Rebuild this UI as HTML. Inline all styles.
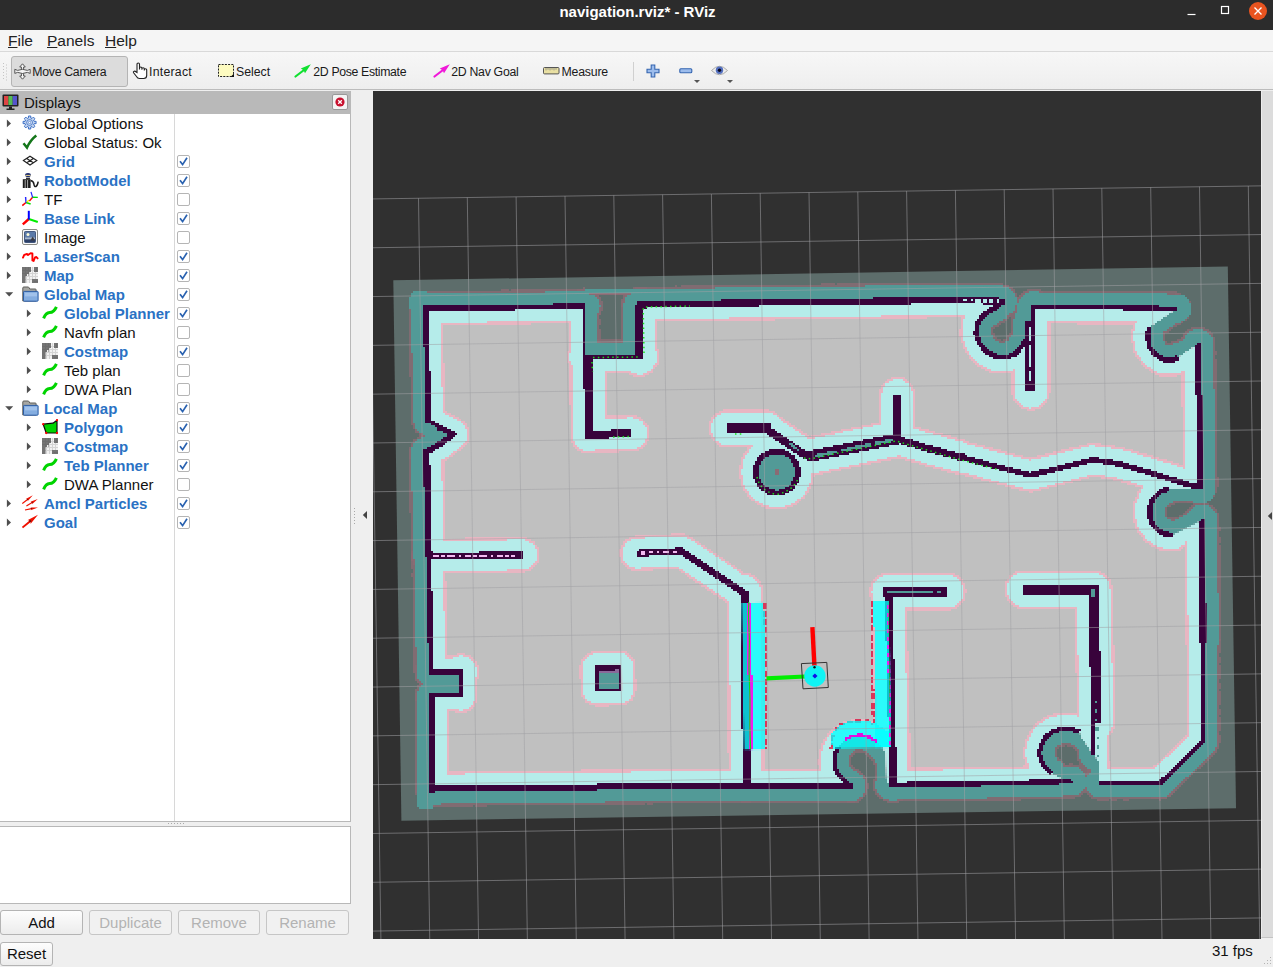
<!DOCTYPE html>
<html><head><meta charset="utf-8"><title>navigation.rviz* - RViz</title>
<style>
html,body{margin:0;padding:0}
body{width:1273px;height:967px;overflow:hidden;background:#efefef;font-family:"Liberation Sans","DejaVu Sans",sans-serif;font-size:15px;color:#1a1a1a;position:relative}
#title{position:absolute;left:0;top:0;width:1273px;height:30px;background:#2c2c2c}
#title .t{position:absolute;left:0;width:1275px;top:3px;text-align:center;color:#fff;font-weight:bold;font-size:15px;line-height:18px}
#menu{position:absolute;left:0;top:30px;width:1273px;height:22px;background:#f5f5f5;border-bottom:1px solid #d9d9d9;box-sizing:content-box;height:21px}
#menu span{position:absolute;top:1px;line-height:19px;font-size:15.5px;color:#222}
#menu u{text-decoration-thickness:1px;text-underline-offset:1px}
#tb{position:absolute;left:0;top:52px;width:1273px;height:37px;background:linear-gradient(#f7f7f7,#eeeeee);border-bottom:1px solid #bcbcbc}
#tb .btn{position:absolute;top:4px;height:28px;box-sizing:border-box}
#tb .tx{position:absolute;top:11.5px;font-size:12.3px;line-height:16px;color:#1a1a1a;white-space:nowrap}
#tb svg{position:absolute}
#dh{position:absolute;left:0;top:91px;width:351px;height:23px;background:#b9b9b9}
#dh .t{position:absolute;left:24px;top:2px;line-height:19px;font-size:15px;color:#111}
#tree{position:absolute;left:0;top:114px;width:350px;height:707px;background:#fff;border-right:1px solid #b8b8b8;border-bottom:1px solid #b8b8b8}
#tree .div{position:absolute;left:174px;top:0;width:1px;height:707px;background:#d8d8d8}
.ar,.ic,.lb,.cb{position:absolute}
.ic{width:16px;height:16px}
.lb{line-height:19px;white-space:nowrap;color:#111}
.lb.b{font-weight:bold;color:#2a72c4}
.cb{width:11px;height:11px;border:1px solid #b5b5b5;background:#fff;border-radius:2px}
#desc{position:absolute;left:0;top:826px;width:350px;height:76px;background:#fff;border:1px solid #b8b8b8;border-left:none}
.pb{position:absolute;box-sizing:border-box;border:1px solid #b4b4b4;border-radius:3px;background:linear-gradient(#fdfdfd,#ececec);text-align:center;font-size:15px;line-height:23px;color:#111}
.pb.dis{color:#b3b3b3;background:#f1f1f1;border-color:#c6c6c6}
#fps{position:absolute;left:1212px;top:941px;line-height:19px;font-size:15px;color:#111}
#view{position:absolute;left:373px;top:91px;width:888px;height:848px;background:#303030;overflow:hidden}
#rside{position:absolute;left:1261px;top:91px;width:12px;height:847px;background:#dcdcdc;border-left:1px solid #ececec;border-bottom:1px solid #c4c4c4;box-sizing:border-box}
</style></head>
<body>
<div id="title"><div class="t">navigation.rviz* - RViz</div>
 <svg style="position:absolute;left:1180px;top:0" width="93" height="30" viewBox="0 0 93 30">
  <path d="M7.5 14.5 h8" stroke="#fff" stroke-width="1.2"/>
  <rect x="41.5" y="6.5" width="7" height="7" fill="none" stroke="#fff" stroke-width="1.2"/>
  <circle cx="78" cy="11" r="9" fill="#e95420"/>
  <path d="M74.5 7.5 l7 7 M81.5 7.5 l-7 7" stroke="#fff" stroke-width="1.4"/>
 </svg>
</div>
<div id="menu"><span style="left:8px"><u>F</u>ile</span><span style="left:47px"><u>P</u>anels</span><span style="left:105px"><u>H</u>elp</span></div>

<div id="tb">
 <svg style="left:3px;top:11px" width="5" height="18" viewBox="0 0 5 18"><g fill="#c4c4c4"><rect x="0" y="0" width="1" height="1"/><rect x="3" y="1.5" width="1" height="1"/><rect x="0" y="3" width="1" height="1"/><rect x="3" y="4.5" width="1" height="1"/><rect x="0" y="6" width="1" height="1"/><rect x="3" y="7.5" width="1" height="1"/><rect x="0" y="9" width="1" height="1"/><rect x="3" y="10.5" width="1" height="1"/><rect x="0" y="12" width="1" height="1"/><rect x="3" y="13.5" width="1" height="1"/><rect x="0" y="15" width="1" height="1"/><rect x="3" y="16.5" width="1" height="1"/></g></svg>
 <div class="btn" style="left:11px;width:117px;top:4px;height:31px;border:1px solid #b4b4b4;border-radius:3px;background:#dcdcdc"></div>
 <svg style="left:14px;top:11px" width="17" height="17" viewBox="0 0 17 17"><g fill="#f4f4f4" stroke="#555" stroke-width="1"><path d="M8.5 .8 L11.3 4 H9.6 V7.2 H7.4 V4 H5.7 Z"/><path d="M8.5 16.2 L11.3 13 H9.6 V9.8 H7.4 V13 H5.7 Z"/><path d="M.8 6.3 L3.6 7.4 Q8.5 5.2 13.4 7.4 L16.2 6.3 V10.4 L13.4 9.4 Q8.5 11.6 3.6 9.4 L.8 10.4 Z"/></g></svg>
 <span class="tx" style="left:32.3px;letter-spacing:-.3px">Move Camera</span>
 <svg style="left:131.5px;top:10px" width="17" height="18" viewBox="0 0 17 18"><path d="M5 10.5 V2.2 a1.25 1.25 0 0 1 2.5 0 V7.5 V6.2 a1.2 1.2 0 0 1 2.4 0 V7.8 V7 a1.2 1.2 0 0 1 2.4 0 V8.6 V8 a1.2 1.2 0 0 1 2.4 0 V13.5 q0 3 -3 3 H7.5 q-2 0 -3 -2 L1.6 10.8 q-.6 -1.2 .6 -1.6 q1 -.3 1.7 .6 Z" fill="#fff" stroke="#222" stroke-width="1.1"/></svg>
 <span class="tx" style="left:149px;letter-spacing:.25px">Interact</span>
 <svg style="left:217px;top:11px" width="18" height="15" viewBox="0 0 18 15"><rect x="1.5" y="1.5" width="15" height="12" fill="#fdfbc0" stroke="#222" stroke-width="1" stroke-dasharray="2 1.2"/><path d="M17 10.5 V14 H13.5 Z" fill="#111"/></svg>
 <span class="tx" style="left:236px">Select</span>
 <svg style="left:294px;top:11px" width="18" height="15" viewBox="0 0 18 15"><path d="M1.5 13.5 L10 7" stroke="#10e030" stroke-width="2.2" stroke-linecap="round"/><path d="M6.8 5.6 L16.8 1.2 L11 10.2 L9.6 7.2 Z" fill="#10e030"/></svg>
 <span class="tx" style="left:313.3px;letter-spacing:-.35px">2D Pose Estimate</span>
 <svg style="left:432.5px;top:11px" width="18" height="15" viewBox="0 0 18 15"><path d="M1.5 13.5 L10 7" stroke="#f018d8" stroke-width="2.2" stroke-linecap="round"/><path d="M6.8 5.6 L16.8 1.2 L11 10.2 L9.6 7.2 Z" fill="#f018d8"/></svg>
 <span class="tx" style="left:451.3px;letter-spacing:-.3px">2D Nav Goal</span>
 <svg style="left:543px;top:15px" width="17" height="8" viewBox="0 0 17 8"><rect x=".5" y=".5" width="15.5" height="6.4" rx="1" fill="#e9e0a3" stroke="#555" stroke-width="1"/><path d="M3 1 v2.4 M5 1 v1.8 M7 1 v2.4 M9 1 v1.8 M11 1 v2.4 M13 1 v1.8" stroke="#777" stroke-width=".7"/></svg>
 <span class="tx" style="left:561.5px;letter-spacing:-.2px">Measure</span>
 <div style="position:absolute;left:633px;top:10px;width:1px;height:19px;background:#d0d0d0"></div>
 <svg style="left:646px;top:12px" width="14" height="14" viewBox="0 0 14 14"><path d="M5.2 1 h3.6 v4.2 h4.2 v3.6 h-4.2 v4.2 h-3.6 v-4.2 h-4.2 v-3.6 h4.2 z" fill="#9cbcec" stroke="#3465b0" stroke-width="1.1"/></svg>
 <svg style="left:679px;top:16px" width="14" height="6" viewBox="0 0 14 6"><rect x=".8" y=".8" width="12" height="4" rx="1" fill="#9cbcec" stroke="#3465b0" stroke-width="1.1"/></svg>
 <svg style="left:694px;top:28px" width="6" height="4" viewBox="0 0 6 4"><path d="M0 0 H6 L3 3 Z" fill="#555"/></svg>
 <svg style="left:710.5px;top:13px" width="17" height="12" viewBox="0 0 17 12"><path d="M.5 5.5 Q8.5 -3 16.5 5.5 Q8.5 14 .5 5.5 Z" fill="#ececec" stroke="#aaa" stroke-width="1"/><circle cx="8.5" cy="5.3" r="3.7" fill="#5470c0"/><circle cx="8.5" cy="5.3" r="1.7" fill="#0a0a20"/></svg>
 <svg style="left:727.3px;top:28px" width="6" height="4" viewBox="0 0 6 4"><path d="M0 0 H6 L3 3 Z" fill="#555"/></svg>
</div>
<div id="dh">
 <svg style="position:absolute;left:2px;top:3px" width="17" height="17" viewBox="0 0 17 17"><rect x=".5" y=".5" width="16" height="12" rx="1" fill="#222"/><rect x="2" y="2" width="4.4" height="9" fill="#d44"/><rect x="6.4" y="2" width="4.3" height="9" fill="#5b5"/><rect x="10.7" y="2" width="4.3" height="9" fill="#55c"/><path d="M7 12.5 h3 v2 h2.5 v1.5 h-8 v-1.5 h2.5 z" fill="#222"/></svg>
 <span class="t">Displays</span>
 <span style="position:absolute;left:332px;top:3px;width:14px;height:14px;border:1px solid #999;border-radius:2px;background:#f4f4f4"></span>
 <svg style="position:absolute;left:335px;top:6px" width="10" height="10" viewBox="0 0 10 10"><circle cx="5" cy="5" r="4.6" fill="#c8102e"/><path d="M3.2 3.2 l3.6 3.6 M6.8 3.2 l-3.6 3.6" stroke="#fff" stroke-width="1.3"/></svg>
</div>
<div id="tree"><div class="div"></div></div>
<svg class="ar" style="left:6px;top:119px" width="8" height="9" viewBox="0 0 8 9"><path d="M.9 .6 L5 4.4 L.9 8.2 Z" fill="#4e4e4e"/></svg><span class="ic" style="left:22px;top:115px"><svg width="16" height="16" viewBox="0 0 16 16"><path d="M12.16 6.37 L14.10 6.34 L14.10 8.66 L12.16 8.63 L11.63 9.92 L13.01 11.27 L11.37 12.91 L10.02 11.53 L8.73 12.06 L8.76 14.00 L6.44 14.00 L6.47 12.06 L5.18 11.53 L3.83 12.91 L2.19 11.27 L3.57 9.92 L3.04 8.63 L1.10 8.66 L1.10 6.34 L3.04 6.37 L3.57 5.08 L2.19 3.73 L3.83 2.09 L5.18 3.47 L6.47 2.94 L6.44 1.00 L8.76 1.00 L8.73 2.94 L10.02 3.47 L11.37 2.09 L13.01 3.73 L11.63 5.08 Z" fill="#c3d4ee" stroke="#3b6fc6" stroke-width="1" stroke-linejoin="round"/><circle cx="7.6" cy="7.5" r="2.9" fill="#dfe8f6" stroke="#3b6fc6" stroke-width=".9"/><circle cx="7.6" cy="7.5" r="1.2" fill="#fff" stroke="#3b6fc6" stroke-width=".7"/></svg></span><span class="lb" style="left:44px;top:114px">Global Options</span>
<svg class="ar" style="left:6px;top:138px" width="8" height="9" viewBox="0 0 8 9"><path d="M.9 .6 L5 4.4 L.9 8.2 Z" fill="#4e4e4e"/></svg><span class="ic" style="left:22px;top:134px"><svg width="16" height="16" viewBox="0 0 16 16"><path d="M1.5 9.3 L5 13.6 Q8.5 6 14.3 1.6" fill="none" stroke="#14761a" stroke-width="2.5" stroke-linejoin="miter"/></svg></span><span class="lb" style="left:44px;top:133px">Global Status: Ok</span>
<svg class="ar" style="left:6px;top:157px" width="8" height="9" viewBox="0 0 8 9"><path d="M.9 .6 L5 4.4 L.9 8.2 Z" fill="#4e4e4e"/></svg><span class="ic" style="left:22px;top:153px"><svg width="16" height="16" viewBox="0 0 16 16"><path d="M1.4 7.6 L8 3.2 L14.8 7.6 L8 12 Z M4.7 5.4 L11.4 9.8 M11.4 5.4 L4.7 9.8" fill="none" stroke="#222" stroke-width="1.15"/></svg></span><span class="lb b" style="left:44px;top:152px">Grid</span><span class="cb" style="left:177px;top:155px"><svg width="13" height="13" viewBox="0 0 13 13" style="position:absolute;left:-1px;top:-1px"><path d="M3 6.2 L5.6 9.6 L10 2.8" fill="none" stroke="#2a62b0" stroke-width="1.7"/></svg></span>
<svg class="ar" style="left:6px;top:176px" width="8" height="9" viewBox="0 0 8 9"><path d="M.9 .6 L5 4.4 L.9 8.2 Z" fill="#4e4e4e"/></svg><span class="ic" style="left:22px;top:172px"><svg width="17" height="17" viewBox="0 0 17 17"><ellipse cx="6" cy="3" rx="2.9" ry="2" fill="#1e2c6e"/><rect x="3.4" y="2.9" width="5.2" height="1" fill="#e8d890"/><path d="M4 5.6 h4 v1.6 h-4 z" fill="#333"/><path d="M.8 7.2 h7.8 v8.8 h-7.8 z" fill="#1a1a1a"/><path d="M3.2 8 v8 M5.6 8 v8" stroke="#bbb" stroke-width=".9"/><path d="M8.6 8.5 q3 .5 3.4 4 q.3 2.5 2 2 q1.4 -.6 2.2 -4.8" fill="none" stroke="#1a1a1a" stroke-width="1.5"/></svg></span><span class="lb b" style="left:44px;top:171px">RobotModel</span><span class="cb" style="left:177px;top:174px"><svg width="13" height="13" viewBox="0 0 13 13" style="position:absolute;left:-1px;top:-1px"><path d="M3 6.2 L5.6 9.6 L10 2.8" fill="none" stroke="#2a62b0" stroke-width="1.7"/></svg></span>
<svg class="ar" style="left:6px;top:195px" width="8" height="9" viewBox="0 0 8 9"><path d="M.9 .6 L5 4.4 L.9 8.2 Z" fill="#4e4e4e"/></svg><span class="ic" style="left:22px;top:191px"><svg width="17" height="16" viewBox="0 0 17 16"><path d="M4 11.5 L.3 14.6" stroke="#f00" stroke-width="1.5"/><path d="M4 11.5 L8.6 13" stroke="#0d0" stroke-width="1.4"/><path d="M4 11.8 L3.6 6" stroke="#22f" stroke-width="1.4"/><path d="M4.6 11 L7 9.3" stroke="#ee0" stroke-width="1.3"/><path d="M10.6 6.2 L7.4 10" stroke="#f00" stroke-width="1.4"/><path d="M10.4 6.2 L15.8 6.4" stroke="#0d0" stroke-width="1.4"/><path d="M10.6 6.4 L9.8 3.6 L9 .8" stroke="#22f" stroke-width="1.2" fill="none"/></svg></span><span class="lb" style="left:44px;top:190px">TF</span><span class="cb" style="left:177px;top:193px"></span>
<svg class="ar" style="left:6px;top:214px" width="8" height="9" viewBox="0 0 8 9"><path d="M.9 .6 L5 4.4 L.9 8.2 Z" fill="#4e4e4e"/></svg><span class="ic" style="left:22px;top:210px"><svg width="17" height="16" viewBox="0 0 17 16"><path d="M6.8 9 L.8 14.4" stroke="#f00" stroke-width="2.4"/><path d="M6.8 9 L15.8 12" stroke="#0e0" stroke-width="2.2"/><path d="M6.8 9.6 L6.8 .8" stroke="#00f" stroke-width="2"/></svg></span><span class="lb b" style="left:44px;top:209px">Base Link</span><span class="cb" style="left:177px;top:212px"><svg width="13" height="13" viewBox="0 0 13 13" style="position:absolute;left:-1px;top:-1px"><path d="M3 6.2 L5.6 9.6 L10 2.8" fill="none" stroke="#2a62b0" stroke-width="1.7"/></svg></span>
<svg class="ar" style="left:6px;top:233px" width="8" height="9" viewBox="0 0 8 9"><path d="M.9 .6 L5 4.4 L.9 8.2 Z" fill="#4e4e4e"/></svg><span class="ic" style="left:22px;top:229px"><svg width="16" height="16" viewBox="0 0 16 16"><rect x=".5" y=".5" width="15" height="15" rx="1.5" fill="#fafafa" stroke="#8a8a84" stroke-width="1"/><rect x="2.5" y="2.5" width="11" height="11" rx=".8" fill="#5b7aa8" stroke="#2c426c" stroke-width=".8"/><rect x="3" y="8.5" width="10" height="2" fill="#a9b8cc"/><rect x="3" y="10.5" width="10" height="2.6" fill="#2d4068"/><path d="M8.6 11 L10.8 7.4 L11.8 9.4 L12.8 10.6 V11.6 H8.6 Z" fill="#3c3c40"/><circle cx="6" cy="5.4" r="1.5" fill="#fdfbd8"/></svg></span><span class="lb" style="left:44px;top:228px">Image</span><span class="cb" style="left:177px;top:231px"></span>
<svg class="ar" style="left:6px;top:252px" width="8" height="9" viewBox="0 0 8 9"><path d="M.9 .6 L5 4.4 L.9 8.2 Z" fill="#4e4e4e"/></svg><span class="ic" style="left:22px;top:248px"><svg width="17" height="16" viewBox="0 0 17 16"><path d="M1 9.6 L2.2 6.8 L5 6 L6 7 L8.6 5.2 L10.4 5.4 L10.4 12.4 L11.6 13 L13 9.4 L14.4 9 L15.6 10.4" fill="none" stroke="#f00" stroke-width="1.9" stroke-linejoin="round" stroke-linecap="round"/></svg></span><span class="lb b" style="left:44px;top:247px">LaserScan</span><span class="cb" style="left:177px;top:250px"><svg width="13" height="13" viewBox="0 0 13 13" style="position:absolute;left:-1px;top:-1px"><path d="M3 6.2 L5.6 9.6 L10 2.8" fill="none" stroke="#2a62b0" stroke-width="1.7"/></svg></span>
<svg class="ar" style="left:6px;top:271px" width="8" height="9" viewBox="0 0 8 9"><path d="M.9 .6 L5 4.4 L.9 8.2 Z" fill="#4e4e4e"/></svg><span class="ic" style="left:22px;top:267px"><svg width="16" height="16" viewBox="0 0 16 16" shape-rendering="crispEdges"><rect x="0" y="0" width="16" height="16" fill="#f2f2f2"/><path d="M4 0v16M7 0v16M10 0v16M13 0v16M0 3h16M0 6h16M0 9h16M0 12h16" stroke="#d4d4d4" stroke-width="1"/><path d="M0 0h9v5h-2v2h-2v2h-2v7h-3z M12 0h4v5h-4z M9.5 12h6.5v4h-6.5z" fill="#747474"/><path d="M3 0v16M6 0v9M0 3h9M0 6h6M14 0v5M12 14h4" stroke="#686868" stroke-width="1" opacity=".5"/></svg></span><span class="lb b" style="left:44px;top:266px">Map</span><span class="cb" style="left:177px;top:269px"><svg width="13" height="13" viewBox="0 0 13 13" style="position:absolute;left:-1px;top:-1px"><path d="M3 6.2 L5.6 9.6 L10 2.8" fill="none" stroke="#2a62b0" stroke-width="1.7"/></svg></span>
<svg class="ar" style="left:5px;top:291px" width="9" height="8" viewBox="0 0 9 8"><path d="M.2 1.2 L8.2 1.2 L4.2 5.4 Z" fill="#4e4e4e"/></svg><span class="ic" style="left:22px;top:286px"><svg width="17" height="16" viewBox="0 0 17 16"><path d="M.8 15 V2 q0 -1 1 -1 h4.2 q.8 0 1.1 .7 l.6 1.3 h5.6 q.8 0 .8 .8 V15 Z" fill="#a6a6a2" stroke="#5c5c58" stroke-width="1"/><path d="M2.2 5.4 h13.3 q.6 0 .6 .6 v8.4 q0 .8 -.8 .8 h-13 q-.8 0 -.8 -.8 v-8.2 q0 -.8 .7 -.8 z" fill="#84ade0" stroke="#2b5ca4" stroke-width="1"/><path d="M3 6.8 h12 v3.6 h-12 z" fill="#a9c7ee" opacity=".8"/></svg></span><span class="lb b" style="left:44px;top:285px">Global Map</span><span class="cb" style="left:177px;top:288px"><svg width="13" height="13" viewBox="0 0 13 13" style="position:absolute;left:-1px;top:-1px"><path d="M3 6.2 L5.6 9.6 L10 2.8" fill="none" stroke="#2a62b0" stroke-width="1.7"/></svg></span>
<svg class="ar" style="left:26px;top:309px" width="8" height="9" viewBox="0 0 8 9"><path d="M.9 .6 L5 4.4 L.9 8.2 Z" fill="#4e4e4e"/></svg><span class="ic" style="left:42px;top:305px"><svg width="17" height="16" viewBox="0 0 17 16"><path d="M1.6 13.4 C3.4 9 5 7.8 7.6 7.6 C10.6 7.4 12.6 6 14.4 1.8" fill="none" stroke="#00d400" stroke-width="3"/></svg></span><span class="lb b" style="left:64px;top:304px">Global Planner</span><span class="cb" style="left:177px;top:307px"><svg width="13" height="13" viewBox="0 0 13 13" style="position:absolute;left:-1px;top:-1px"><path d="M3 6.2 L5.6 9.6 L10 2.8" fill="none" stroke="#2a62b0" stroke-width="1.7"/></svg></span>
<svg class="ar" style="left:26px;top:328px" width="8" height="9" viewBox="0 0 8 9"><path d="M.9 .6 L5 4.4 L.9 8.2 Z" fill="#4e4e4e"/></svg><span class="ic" style="left:42px;top:324px"><svg width="17" height="16" viewBox="0 0 17 16"><path d="M1.6 13.4 C3.4 9 5 7.8 7.6 7.6 C10.6 7.4 12.6 6 14.4 1.8" fill="none" stroke="#00d400" stroke-width="3"/></svg></span><span class="lb" style="left:64px;top:323px">Navfn plan</span><span class="cb" style="left:177px;top:326px"></span>
<svg class="ar" style="left:26px;top:347px" width="8" height="9" viewBox="0 0 8 9"><path d="M.9 .6 L5 4.4 L.9 8.2 Z" fill="#4e4e4e"/></svg><span class="ic" style="left:42px;top:343px"><svg width="16" height="16" viewBox="0 0 16 16" shape-rendering="crispEdges"><rect x="0" y="0" width="16" height="16" fill="#f2f2f2"/><path d="M4 0v16M7 0v16M10 0v16M13 0v16M0 3h16M0 6h16M0 9h16M0 12h16" stroke="#d4d4d4" stroke-width="1"/><path d="M0 0h9v5h-2v2h-2v2h-2v7h-3z M12 0h4v5h-4z M9.5 12h6.5v4h-6.5z" fill="#747474"/><path d="M3 0v16M6 0v9M0 3h9M0 6h6M14 0v5M12 14h4" stroke="#686868" stroke-width="1" opacity=".5"/></svg></span><span class="lb b" style="left:64px;top:342px">Costmap</span><span class="cb" style="left:177px;top:345px"><svg width="13" height="13" viewBox="0 0 13 13" style="position:absolute;left:-1px;top:-1px"><path d="M3 6.2 L5.6 9.6 L10 2.8" fill="none" stroke="#2a62b0" stroke-width="1.7"/></svg></span>
<svg class="ar" style="left:26px;top:366px" width="8" height="9" viewBox="0 0 8 9"><path d="M.9 .6 L5 4.4 L.9 8.2 Z" fill="#4e4e4e"/></svg><span class="ic" style="left:42px;top:362px"><svg width="17" height="16" viewBox="0 0 17 16"><path d="M1.6 13.4 C3.4 9 5 7.8 7.6 7.6 C10.6 7.4 12.6 6 14.4 1.8" fill="none" stroke="#00d400" stroke-width="3"/></svg></span><span class="lb" style="left:64px;top:361px">Teb plan</span><span class="cb" style="left:177px;top:364px"></span>
<svg class="ar" style="left:26px;top:385px" width="8" height="9" viewBox="0 0 8 9"><path d="M.9 .6 L5 4.4 L.9 8.2 Z" fill="#4e4e4e"/></svg><span class="ic" style="left:42px;top:381px"><svg width="17" height="16" viewBox="0 0 17 16"><path d="M1.6 13.4 C3.4 9 5 7.8 7.6 7.6 C10.6 7.4 12.6 6 14.4 1.8" fill="none" stroke="#00d400" stroke-width="3"/></svg></span><span class="lb" style="left:64px;top:380px">DWA Plan</span><span class="cb" style="left:177px;top:383px"></span>
<svg class="ar" style="left:5px;top:405px" width="9" height="8" viewBox="0 0 9 8"><path d="M.2 1.2 L8.2 1.2 L4.2 5.4 Z" fill="#4e4e4e"/></svg><span class="ic" style="left:22px;top:400px"><svg width="17" height="16" viewBox="0 0 17 16"><path d="M.8 15 V2 q0 -1 1 -1 h4.2 q.8 0 1.1 .7 l.6 1.3 h5.6 q.8 0 .8 .8 V15 Z" fill="#a6a6a2" stroke="#5c5c58" stroke-width="1"/><path d="M2.2 5.4 h13.3 q.6 0 .6 .6 v8.4 q0 .8 -.8 .8 h-13 q-.8 0 -.8 -.8 v-8.2 q0 -.8 .7 -.8 z" fill="#84ade0" stroke="#2b5ca4" stroke-width="1"/><path d="M3 6.8 h12 v3.6 h-12 z" fill="#a9c7ee" opacity=".8"/></svg></span><span class="lb b" style="left:44px;top:399px">Local Map</span><span class="cb" style="left:177px;top:402px"><svg width="13" height="13" viewBox="0 0 13 13" style="position:absolute;left:-1px;top:-1px"><path d="M3 6.2 L5.6 9.6 L10 2.8" fill="none" stroke="#2a62b0" stroke-width="1.7"/></svg></span>
<svg class="ar" style="left:26px;top:423px" width="8" height="9" viewBox="0 0 8 9"><path d="M.9 .6 L5 4.4 L.9 8.2 Z" fill="#4e4e4e"/></svg><span class="ic" style="left:42px;top:419px"><svg width="17" height="16" viewBox="0 0 17 16"><path d="M1.2 5.2 L11 4.2 L15 1.2 L15 14 L4.2 14 Z" fill="#00d400" stroke="#0a0a0a" stroke-width="1.2" stroke-linejoin="round"/><circle cx="1.2" cy="5.2" r="1.15" fill="#f00"/><circle cx="15" cy="1.2" r="1.15" fill="#f00"/><circle cx="15" cy="14" r="1.15" fill="#f00"/><circle cx="4.2" cy="14" r="1.15" fill="#f00"/></svg></span><span class="lb b" style="left:64px;top:418px">Polygon</span><span class="cb" style="left:177px;top:421px"><svg width="13" height="13" viewBox="0 0 13 13" style="position:absolute;left:-1px;top:-1px"><path d="M3 6.2 L5.6 9.6 L10 2.8" fill="none" stroke="#2a62b0" stroke-width="1.7"/></svg></span>
<svg class="ar" style="left:26px;top:442px" width="8" height="9" viewBox="0 0 8 9"><path d="M.9 .6 L5 4.4 L.9 8.2 Z" fill="#4e4e4e"/></svg><span class="ic" style="left:42px;top:438px"><svg width="16" height="16" viewBox="0 0 16 16" shape-rendering="crispEdges"><rect x="0" y="0" width="16" height="16" fill="#f2f2f2"/><path d="M4 0v16M7 0v16M10 0v16M13 0v16M0 3h16M0 6h16M0 9h16M0 12h16" stroke="#d4d4d4" stroke-width="1"/><path d="M0 0h9v5h-2v2h-2v2h-2v7h-3z M12 0h4v5h-4z M9.5 12h6.5v4h-6.5z" fill="#747474"/><path d="M3 0v16M6 0v9M0 3h9M0 6h6M14 0v5M12 14h4" stroke="#686868" stroke-width="1" opacity=".5"/></svg></span><span class="lb b" style="left:64px;top:437px">Costmap</span><span class="cb" style="left:177px;top:440px"><svg width="13" height="13" viewBox="0 0 13 13" style="position:absolute;left:-1px;top:-1px"><path d="M3 6.2 L5.6 9.6 L10 2.8" fill="none" stroke="#2a62b0" stroke-width="1.7"/></svg></span>
<svg class="ar" style="left:26px;top:461px" width="8" height="9" viewBox="0 0 8 9"><path d="M.9 .6 L5 4.4 L.9 8.2 Z" fill="#4e4e4e"/></svg><span class="ic" style="left:42px;top:457px"><svg width="17" height="16" viewBox="0 0 17 16"><path d="M1.6 13.4 C3.4 9 5 7.8 7.6 7.6 C10.6 7.4 12.6 6 14.4 1.8" fill="none" stroke="#00d400" stroke-width="3"/></svg></span><span class="lb b" style="left:64px;top:456px">Teb Planner</span><span class="cb" style="left:177px;top:459px"><svg width="13" height="13" viewBox="0 0 13 13" style="position:absolute;left:-1px;top:-1px"><path d="M3 6.2 L5.6 9.6 L10 2.8" fill="none" stroke="#2a62b0" stroke-width="1.7"/></svg></span>
<svg class="ar" style="left:26px;top:480px" width="8" height="9" viewBox="0 0 8 9"><path d="M.9 .6 L5 4.4 L.9 8.2 Z" fill="#4e4e4e"/></svg><span class="ic" style="left:42px;top:476px"><svg width="17" height="16" viewBox="0 0 17 16"><path d="M1.6 13.4 C3.4 9 5 7.8 7.6 7.6 C10.6 7.4 12.6 6 14.4 1.8" fill="none" stroke="#00d400" stroke-width="3"/></svg></span><span class="lb" style="left:64px;top:475px">DWA Planner</span><span class="cb" style="left:177px;top:478px"></span>
<svg class="ar" style="left:6px;top:499px" width="8" height="9" viewBox="0 0 8 9"><path d="M.9 .6 L5 4.4 L.9 8.2 Z" fill="#4e4e4e"/></svg><span class="ic" style="left:22px;top:495px"><svg width="17" height="17" viewBox="0 0 17 17"><path d="M0.67 9.07 L5.92 4.92 L5.64 6.29 L10.80 0.30 L3.78 3.94 L5.18 3.98 L-0.07 8.13 Z" fill="#f01000"/><circle cx="5.55" cy="4.45" r="0.66" fill="#7a1008"/><path d="M4.71 11.51 L10.41 8.01 L9.97 9.34 L15.80 4.00 L8.40 6.78 L9.79 6.99 L4.09 10.49 Z" fill="#f01000"/><circle cx="10.10" cy="7.50" r="0.66" fill="#7a1008"/><path d="M3.12 15.59 L9.62 14.29 L8.72 15.23 L16.00 12.40 L8.20 12.58 L9.38 13.11 L2.88 14.41 Z" fill="#f01000"/><circle cx="9.50" cy="13.70" r="0.66" fill="#7a1008"/></svg></span><span class="lb b" style="left:44px;top:494px">Amcl Particles</span><span class="cb" style="left:177px;top:497px"><svg width="13" height="13" viewBox="0 0 13 13" style="position:absolute;left:-1px;top:-1px"><path d="M3 6.2 L5.6 9.6 L10 2.8" fill="none" stroke="#2a62b0" stroke-width="1.7"/></svg></span>
<svg class="ar" style="left:6px;top:518px" width="8" height="9" viewBox="0 0 8 9"><path d="M.9 .6 L5 4.4 L.9 8.2 Z" fill="#4e4e4e"/></svg><span class="ic" style="left:22px;top:514px"><svg width="17" height="16" viewBox="0 0 17 16"><path d="M1.03 14.37 L8.83 7.97 L8.47 10.08 L16.00 0.80 L5.43 6.37 L7.57 6.43 L-0.23 12.83 Z" fill="#f01000"/><circle cx="8.20" cy="7.20" r="1.10" fill="#7a1008"/></svg></span><span class="lb b" style="left:44px;top:513px">Goal</span><span class="cb" style="left:177px;top:516px"><svg width="13" height="13" viewBox="0 0 13 13" style="position:absolute;left:-1px;top:-1px"><path d="M3 6.2 L5.6 9.6 L10 2.8" fill="none" stroke="#2a62b0" stroke-width="1.7"/></svg></span>
<svg style="position:absolute;left:168px;top:822px" width="16" height="3" viewBox="0 0 16 3"><g fill="#aaa"><rect x="0" y="1" width="1" height="1"/><rect x="3" y="1" width="1" height="1"/><rect x="6" y="1" width="1" height="1"/><rect x="9" y="1" width="1" height="1"/><rect x="12" y="1" width="1" height="1"/><rect x="15" y="1" width="1" height="1"/></g></svg>
<div id="desc"></div>
<div class="pb" style="left:0;top:910px;width:83px;height:25px">Add</div>
<div class="pb dis" style="left:89px;top:910px;width:83px;height:25px">Duplicate</div>
<div class="pb dis" style="left:178px;top:910px;width:82px;height:25px">Remove</div>
<div class="pb dis" style="left:266px;top:910px;width:83px;height:25px">Rename</div>
<div class="pb" style="left:0;top:942px;width:53px;height:24px;line-height:22px">Reset</div>
<div id="fps">31 fps</div>
<svg style="position:absolute;left:1261px;top:955px" width="12" height="12" viewBox="0 0 12 12"><g fill="#b4b4b4"><rect x="9" y="2" width="1" height="1"/><rect x="6" y="5" width="1" height="1"/><rect x="9" y="5" width="1" height="1"/><rect x="3" y="8" width="1" height="1"/><rect x="6" y="8" width="1" height="1"/><rect x="9" y="8" width="1" height="1"/></g></svg>
<svg style="position:absolute;left:354px;top:508px" width="2" height="17" viewBox="0 0 2 17"><g fill="#a8a8a8"><rect x="0" y="0" width="1" height="1"/><rect x="0" y="3" width="1" height="1"/><rect x="0" y="6" width="1" height="1"/><rect x="0" y="9" width="1" height="1"/><rect x="0" y="12" width="1" height="1"/><rect x="0" y="15" width="1" height="1"/></g></svg>
<svg style="position:absolute;left:362px;top:510px" width="6" height="10" viewBox="0 0 6 10"><path d="M5 1 L.8 5 L5 9 Z" fill="#444"/></svg>
<div id="rside"><svg style="position:absolute;left:4.5px;top:419.5px" width="6" height="10" viewBox="0 0 6 10"><path d="M5 1 L.8 5 L5 9 Z" fill="#444"/></svg></div>
<div id="view">
<svg width="888" height="848" viewBox="373 91 888 848" style="position:absolute;left:0;top:0;display:block">
<defs><clipPath id="fc"><path d="M428.0 419.5 L426.5 360.0 L425.5 308.0 L584.8 305.8 L583.8 303.2 L583.8 356.0 L582.7 356.3 L643.0 356.3 L639.2 358.6 L639.2 304.5 L680.0 303.3 L960.0 299.6 L1000.9 300.8 L996.0 306.5 L982.6 314.6 L977.0 322.8 L975.7 332.8 L978.9 342.9 L986.4 351.7 L996.5 356.7 L1006.5 356.7 L1015.3 353.0 L1021.6 345.4 L1026.0 339.0 L1029.0 330.0 L1031.5 320.0 L1033.2 307.0 L1031.0 307.0 L1110.0 307.1 L1176.6 308.0 L1152.7 324.0 L1149.0 326.6 L1147.1 335.4 L1149.0 346.7 L1155.2 354.3 L1162.8 359.3 L1172.8 359.3 L1177.9 356.8 L1197.7 343.5 L1200.0 488.0 L1180.0 487.5 L1167.9 487.8 L1159.1 491.5 L1152.8 497.8 L1149.0 506.6 L1149.0 515.4 L1151.5 523.0 L1156.6 529.2 L1164.1 533.6 L1172.9 534.3 L1195.5 523.0 L1201.5 519.5 L1202.6 640.0 L1202.6 741.0 L1159.5 782.6 L1099.2 783.0 L1098.6 762.0 L1095.0 756.0 L1091.6 752.8 L1087.9 746.5 L1081.6 737.7 L1079.1 731.4 L1072.8 728.9 L1061.5 728.7 L1053.9 730.2 L1047.0 734.6 L1042.6 740.2 L1040.1 746.5 L1038.9 752.8 L1041.4 761.6 L1045.1 767.9 L1050.8 772.9 L1060.0 778.0 L1071.5 780.6 L1020.0 782.3 L960.0 783.4 L889.5 784.2 L886.0 780.0 L885.5 752.0 L881.0 746.0 L876.7 741.5 L869.1 736.5 L860.3 734.6 L850.3 735.9 L844.0 739.6 L838.0 746.0 L834.5 754.0 L833.5 762.0 L836.0 771.0 L841.0 778.0 L850.3 785.5 L745.5 784.8 L680.0 785.5 L432.0 788.5 L431.5 694.3 L460.5 694.3 L460.5 695.8 L460.5 669.3 L462.8 671.6 L430.6 671.6 L428.3 554.0 L426.0 452.0 L440.0 443.0 L452.5 434.0 L440.0 427.0 L428.0 419.5 Z M593.9 664.1 L621.0 663.7 L621.4 690.7 L594.3 691.1 Z M797.2 471.6 L797.0 474.3 L796.5 477.0 L795.6 479.6 L794.4 482.1 L792.9 484.3 L791.1 486.4 L789.0 488.2 L786.8 489.7 L784.3 490.9 L781.7 491.8 L779.0 492.3 L776.3 492.5 L773.6 492.3 L770.9 491.8 L768.3 490.9 L765.8 489.7 L763.6 488.2 L761.5 486.4 L759.7 484.3 L758.2 482.1 L757.0 479.6 L756.1 477.0 L755.6 474.3 L755.4 471.6 L755.6 468.9 L756.1 466.2 L757.0 463.6 L758.2 461.2 L759.7 458.9 L761.5 456.8 L763.6 455.0 L765.8 453.5 L768.3 452.3 L770.9 451.4 L773.6 450.9 L776.3 450.7 L779.0 450.9 L781.7 451.4 L784.3 452.3 L786.7 453.5 L789.0 455.0 L791.1 456.8 L792.9 458.9 L794.4 461.2 L795.6 463.6 L796.5 466.2 L797.0 468.9 Z" clip-rule="evenodd"/></clipPath><clipPath id="qc"><path d="M393.3 280.3 L1227.8 266.5 L1236.0 808.2 L401.4 820.7 Z"/></clipPath><filter id="px" filterUnits="userSpaceOnUse" x="373" y="91" width="888" height="848" color-interpolation-filters="sRGB"><feFlood x="373" y="91" width="1" height="1" flood-color="#000"/><feComposite width="2" height="2"/><feTile result="t"/><feComposite in="SourceGraphic" in2="t" operator="in" result="s"/><feOffset in="s" dx="1" dy="0" result="s1"/><feOffset in="s" dx="0" dy="1" result="s2"/><feOffset in="s" dx="1" dy="1" result="s3"/><feMerge><feMergeNode in="s3"/><feMergeNode in="s2"/><feMergeNode in="s1"/><feMergeNode in="s"/></feMerge></filter><clipPath id="lc"><path d="M741.3 602.2 L888.3 599.9 L890.6 746.9 L743.6 749.2 Z"/></clipPath></defs>
<rect x="373" y="91" width="888" height="848" fill="#303030"/>
<path d="M393.3 280.3 L1227.8 266.5 L1236.0 808.2 L401.4 820.7 Z" fill="#5d6d6b"/>
<g shape-rendering="crispEdges" filter="url(#px)">
<g clip-path="url(#qc)" fill="none" stroke-linejoin="round" stroke-linecap="round">
<path d="M428.0 419.5 L426.5 360.0 L425.5 308.0 L584.8 305.8" stroke="#8a6b74" stroke-opacity="0.8" stroke-dasharray="11 6 4 5" stroke-width="34.9"/>
<path d="M583.8 303.2 L583.8 356.0" stroke="#8a6b74" stroke-opacity="0.8" stroke-dasharray="11 6 4 5" stroke-width="31.6"/>
<path d="M582.7 356.3 L643.0 356.3" stroke="#8a6b74" stroke-opacity="0.8" stroke-dasharray="11 6 4 5" stroke-width="34.1"/>
<path d="M639.2 358.6 L639.2 304.5" stroke="#8a6b74" stroke-opacity="0.8" stroke-dasharray="11 6 4 5" stroke-width="36.9"/>
<path d="M639.2 304.5 L680.0 303.3 L960.0 299.6 L1000.9 300.8" stroke="#8a6b74" stroke-opacity="0.8" stroke-dasharray="11 6 4 5" stroke-width="35.9"/>
<path d="M1000.9 300.8 L996.0 306.5 L982.6 314.6 L977.0 322.8 L975.7 332.8 L978.9 342.9 L986.4 351.7 L996.5 356.7 L1006.5 356.7 L1015.3 353.0 L1021.6 345.4 L1026.0 339.0" stroke="#8a6b74" stroke-opacity="0.8" stroke-dasharray="11 6 4 5" stroke-width="34.4"/>
<path d="M1026.0 339.0 L1029.0 330.0 L1031.5 320.0 L1033.2 307.0" stroke="#8a6b74" stroke-opacity="0.8" stroke-dasharray="11 6 4 5" stroke-width="29.4"/>
<path d="M1031.0 307.0 L1110.0 307.1 L1176.6 308.0" stroke="#8a6b74" stroke-opacity="0.8" stroke-dasharray="11 6 4 5" stroke-width="33.9"/>
<path d="M1176.6 308.0 L1152.7 324.0 L1149.0 326.6" stroke="#8a6b74" stroke-opacity="0.8" stroke-dasharray="11 6 4 5" stroke-width="29.4"/>
<path d="M1149.0 326.6 L1147.1 335.4 L1149.0 346.7 L1155.2 354.3 L1162.8 359.3 L1172.8 359.3 L1177.9 356.8" stroke="#8a6b74" stroke-opacity="0.8" stroke-dasharray="11 6 4 5" stroke-width="34.4"/>
<path d="M1177.9 356.8 L1197.7 343.5" stroke="#8a6b74" stroke-opacity="0.8" stroke-dasharray="11 6 4 5" stroke-width="29.4"/>
<path d="M1197.7 343.5 L1200.0 488.0" stroke="#8a6b74" stroke-opacity="0.8" stroke-dasharray="11 6 4 5" stroke-width="35.4"/>
<path d="M1200.0 488.0 L1180.0 487.5 L1167.9 487.8" stroke="#8a6b74" stroke-opacity="0.8" stroke-dasharray="11 6 4 5" stroke-width="29.4"/>
<path d="M1167.9 487.8 L1159.1 491.5 L1152.8 497.8 L1149.0 506.6 L1149.0 515.4 L1151.5 523.0 L1156.6 529.2 L1164.1 533.6 L1172.9 534.3" stroke="#8a6b74" stroke-opacity="0.8" stroke-dasharray="11 6 4 5" stroke-width="34.4"/>
<path d="M1172.9 534.3 L1195.5 523.0 L1201.5 519.5" stroke="#8a6b74" stroke-opacity="0.8" stroke-dasharray="11 6 4 5" stroke-width="29.4"/>
<path d="M1201.5 519.5 L1202.6 640.0" stroke="#8a6b74" stroke-opacity="0.8" stroke-dasharray="11 6 4 5" stroke-width="35.9"/>
<path d="M1202.6 640.0 L1202.6 741.0" stroke="#8a6b74" stroke-opacity="0.8" stroke-dasharray="11 6 4 5" stroke-width="34.0"/>
<path d="M1202.6 741.0 L1159.5 782.6" stroke="#8a6b74" stroke-opacity="0.8" stroke-dasharray="11 6 4 5" stroke-width="34.0"/>
<path d="M1159.5 782.6 L1099.2 783.0" stroke="#8a6b74" stroke-opacity="0.8" stroke-dasharray="11 6 4 5" stroke-width="33.4"/>
<path d="M1099.2 783.0 L1098.6 762.0 L1095.0 756.0" stroke="#8a6b74" stroke-opacity="0.8" stroke-dasharray="11 6 4 5" stroke-width="23.4"/>
<path d="M1095.0 756.0 L1091.6 752.8 L1087.9 746.5 L1081.6 737.7 L1079.1 731.4" stroke="#8a6b74" stroke-opacity="0.8" stroke-dasharray="11 6 4 5" stroke-width="25.4"/>
<path d="M1079.1 731.4 L1072.8 728.9 L1061.5 728.7 L1053.9 730.2 L1047.0 734.6 L1042.6 740.2 L1040.1 746.5 L1038.9 752.8 L1041.4 761.6 L1045.1 767.9 L1050.8 772.9" stroke="#8a6b74" stroke-opacity="0.8" stroke-dasharray="11 6 4 5" stroke-width="33.9"/>
<path d="M1050.8 772.9 L1060.0 778.0 L1071.5 780.6" stroke="#8a6b74" stroke-opacity="0.8" stroke-dasharray="11 6 4 5" stroke-width="29.4"/>
<path d="M1071.5 780.6 L1020.0 782.3 L960.0 783.4 L889.5 784.2" stroke="#8a6b74" stroke-opacity="0.8" stroke-dasharray="11 6 4 5" stroke-width="34.4"/>
<path d="M889.5 784.2 L886.0 780.0 L885.5 752.0" stroke="#8a6b74" stroke-opacity="0.8" stroke-dasharray="11 6 4 5" stroke-width="17.4"/>
<path d="M885.5 752.0 L881.0 746.0 L876.7 741.5 L869.1 736.5 L860.3 734.6 L850.3 735.9 L844.0 739.6 L838.0 746.0" stroke="#8a6b74" stroke-opacity="0.8" stroke-dasharray="11 6 4 5" stroke-width="33.4"/>
<path d="M838.0 746.0 L834.5 754.0 L833.5 762.0 L836.0 771.0 L841.0 778.0 L850.3 785.5" stroke="#8a6b74" stroke-opacity="0.8" stroke-dasharray="11 6 4 5" stroke-width="33.4"/>
<path d="M850.3 785.5 L745.5 784.8 L680.0 785.5 L432.0 788.5" stroke="#8a6b74" stroke-opacity="0.8" stroke-dasharray="11 6 4 5" stroke-width="35.4"/>
<path d="M432.0 788.5 L431.5 694.3" stroke="#8a6b74" stroke-opacity="0.8" stroke-dasharray="11 6 4 5" stroke-width="34.4"/>
<path d="M431.5 694.3 L460.5 694.3" stroke="#8a6b74" stroke-opacity="0.8" stroke-dasharray="11 6 4 5" stroke-width="34.4"/>
<path d="M460.5 695.8 L460.5 669.3" stroke="#8a6b74" stroke-opacity="0.8" stroke-dasharray="11 6 4 5" stroke-width="34.2"/>
<path d="M462.8 671.6 L430.6 671.6" stroke="#8a6b74" stroke-opacity="0.8" stroke-dasharray="11 6 4 5" stroke-width="34.1"/>
<path d="M430.6 671.6 L428.3 554.0" stroke="#8a6b74" stroke-opacity="0.8" stroke-dasharray="11 6 4 5" stroke-width="34.4"/>
<path d="M428.3 554.0 L426.0 452.0" stroke="#8a6b74" stroke-opacity="0.8" stroke-dasharray="11 6 4 5" stroke-width="35.9"/>
<path d="M426.0 452.0 L440.0 443.0" stroke="#8a6b74" stroke-opacity="0.8" stroke-dasharray="11 6 4 5" stroke-width="35.4"/>
<path d="M440.0 443.0 L452.5 434.0 L440.0 427.0" stroke="#8a6b74" stroke-opacity="0.8" stroke-dasharray="11 6 4 5" stroke-width="34.9"/>
<path d="M440.0 427.0 L428.0 419.5" stroke="#8a6b74" stroke-opacity="0.8" stroke-dasharray="11 6 4 5" stroke-width="34.9"/>
<path d="M587.8 356.0 L588.8 434.5" stroke="#8a6b74" stroke-opacity="0.8" stroke-dasharray="11 6 4 5" stroke-width="38.8"/>
<path d="M588.8 434.0 L631.0 433.0" stroke="#8a6b74" stroke-opacity="0.8" stroke-dasharray="11 6 4 5" stroke-width="37.4"/>
<path d="M429.0 555.6 L521.6 554.3" stroke="#8a6b74" stroke-opacity="0.8" stroke-dasharray="11 6 4 5" stroke-width="36.2"/>
<path d="M636.4 552.9 L680.4 550.4 L745.4 594.0" stroke="#8a6b74" stroke-opacity="0.8" stroke-dasharray="11 6 4 5" stroke-width="35.9"/>
<path d="M744.3 590.5 L746.0 784.8" stroke="#8a6b74" stroke-opacity="0.8" stroke-dasharray="11 6 4 5" stroke-width="37.4"/>
<path d="M727.0 428.1 L765.3 428.1" stroke="#8a6b74" stroke-opacity="0.8" stroke-dasharray="11 6 4 5" stroke-width="39.0"/>
<path d="M765.3 428.3 L807.5 456.3" stroke="#8a6b74" stroke-opacity="0.8" stroke-dasharray="11 6 4 5" stroke-width="37.4"/>
<path d="M806.5 456.5 L898.0 437.8" stroke="#8a6b74" stroke-opacity="0.8" stroke-dasharray="11 6 4 5" stroke-width="40.4"/>
<path d="M896.2 438.6 L930.0 448.6 L960.0 456.6" stroke="#8a6b74" stroke-opacity="0.8" stroke-dasharray="11 6 4 5" stroke-width="36.4"/>
<path d="M960.0 456.6 L1000.0 467.1 L1029.8 474.7 L1091.3 459.6 L1105.0 461.0 L1120.0 463.6 L1150.0 472.5 L1189.9 484.6 L1197.4 486.5" stroke="#8a6b74" stroke-opacity="0.8" stroke-dasharray="11 6 4 5" stroke-width="34.9"/>
<path d="M896.6 393.9 L896.6 437.0" stroke="#8a6b74" stroke-opacity="0.8" stroke-dasharray="11 6 4 5" stroke-width="36.7"/>
<path d="M1033.2 305.0 L1033.2 322.0" stroke="#8a6b74" stroke-opacity="0.8" stroke-dasharray="11 6 4 5" stroke-width="33.8"/>
<path d="M1030.4 320.0 L1030.4 391.0" stroke="#8a6b74" stroke-opacity="0.8" stroke-dasharray="11 6 4 5" stroke-width="39.4"/>
<path d="M946.8 591.0 L887.8 591.0" stroke="#8a6b74" stroke-opacity="0.8" stroke-dasharray="11 6 4 5" stroke-width="38.9"/>
<path d="M887.8 591.0 L891.0 700.0 L892.4 784.0" stroke="#8a6b74" stroke-opacity="0.8" stroke-dasharray="11 6 4 5" stroke-width="36.9"/>
<path d="M1023.3 589.2 L1092.7 589.2" stroke="#8a6b74" stroke-opacity="0.8" stroke-dasharray="11 6 4 5" stroke-width="40.1"/>
<path d="M1092.7 589.2 L1093.6 630.0 L1095.2 680.0 L1095.5 722.0" stroke="#8a6b74" stroke-opacity="0.8" stroke-dasharray="11 6 4 5" stroke-width="39.9"/>
<path d="M1093.2 722.0 L1093.2 755.0" stroke="#8a6b74" stroke-opacity="0.8" stroke-dasharray="11 6 4 5" stroke-width="33.4"/>
<path d="M596.0 667.0 L618.6 666.6 L619.0 688.6 L596.4 689.0 Z" stroke="#8a6b74" stroke-opacity="0.8" stroke-dasharray="11 6 4 5" stroke-width="34.4"/>
<path d="M797.2 471.6 L797.0 474.3 L796.5 477.0 L795.6 479.6 L794.4 482.1 L792.9 484.3 L791.1 486.4 L789.0 488.2 L786.8 489.7 L784.3 490.9 L781.7 491.8 L779.0 492.3 L776.3 492.5 L773.6 492.3 L770.9 491.8 L768.3 490.9 L765.8 489.7 L763.6 488.2 L761.5 486.4 L759.7 484.3 L758.2 482.1 L757.0 479.6 L756.1 477.0 L755.6 474.3 L755.4 471.6 L755.6 468.9 L756.1 466.2 L757.0 463.6 L758.2 461.2 L759.7 458.9 L761.5 456.8 L763.6 455.0 L765.8 453.5 L768.3 452.3 L770.9 451.4 L773.6 450.9 L776.3 450.7 L779.0 450.9 L781.7 451.4 L784.3 452.3 L786.7 453.5 L789.0 455.0 L791.1 456.8 L792.9 458.9 L794.4 461.2 L795.6 463.6 L796.5 466.2 L797.0 468.9 Z" stroke="#8a6b74" stroke-opacity="0.8" stroke-dasharray="11 6 4 5" stroke-width="34.4"/>
<path d="M428.0 419.5 L426.5 360.0 L425.5 308.0 L584.8 305.8" stroke="#529a97" stroke-width="29.7"/>
<path d="M583.8 303.2 L583.8 356.0" stroke="#529a97" stroke-width="26.4"/>
<path d="M582.7 356.3 L643.0 356.3" stroke="#529a97" stroke-width="28.9"/>
<path d="M639.2 358.6 L639.2 304.5" stroke="#529a97" stroke-width="31.7"/>
<path d="M639.2 304.5 L680.0 303.3 L960.0 299.6 L1000.9 300.8" stroke="#529a97" stroke-width="30.7"/>
<path d="M1000.9 300.8 L996.0 306.5 L982.6 314.6 L977.0 322.8 L975.7 332.8 L978.9 342.9 L986.4 351.7 L996.5 356.7 L1006.5 356.7 L1015.3 353.0 L1021.6 345.4 L1026.0 339.0" stroke="#529a97" stroke-width="29.2"/>
<path d="M1026.0 339.0 L1029.0 330.0 L1031.5 320.0 L1033.2 307.0" stroke="#529a97" stroke-width="24.2"/>
<path d="M1031.0 307.0 L1110.0 307.1 L1176.6 308.0" stroke="#529a97" stroke-width="28.7"/>
<path d="M1176.6 308.0 L1152.7 324.0 L1149.0 326.6" stroke="#529a97" stroke-width="24.2"/>
<path d="M1149.0 326.6 L1147.1 335.4 L1149.0 346.7 L1155.2 354.3 L1162.8 359.3 L1172.8 359.3 L1177.9 356.8" stroke="#529a97" stroke-width="29.2"/>
<path d="M1177.9 356.8 L1197.7 343.5" stroke="#529a97" stroke-width="24.2"/>
<path d="M1197.7 343.5 L1200.0 488.0" stroke="#529a97" stroke-width="30.2"/>
<path d="M1200.0 488.0 L1180.0 487.5 L1167.9 487.8" stroke="#529a97" stroke-width="24.2"/>
<path d="M1167.9 487.8 L1159.1 491.5 L1152.8 497.8 L1149.0 506.6 L1149.0 515.4 L1151.5 523.0 L1156.6 529.2 L1164.1 533.6 L1172.9 534.3" stroke="#529a97" stroke-width="29.2"/>
<path d="M1172.9 534.3 L1195.5 523.0 L1201.5 519.5" stroke="#529a97" stroke-width="24.2"/>
<path d="M1201.5 519.5 L1202.6 640.0" stroke="#529a97" stroke-width="30.7"/>
<path d="M1202.6 640.0 L1202.6 741.0" stroke="#529a97" stroke-width="28.8"/>
<path d="M1202.6 741.0 L1159.5 782.6" stroke="#529a97" stroke-width="28.8"/>
<path d="M1159.5 782.6 L1099.2 783.0" stroke="#529a97" stroke-width="28.2"/>
<path d="M1099.2 783.0 L1098.6 762.0 L1095.0 756.0" stroke="#529a97" stroke-width="18.2"/>
<path d="M1095.0 756.0 L1091.6 752.8 L1087.9 746.5 L1081.6 737.7 L1079.1 731.4" stroke="#529a97" stroke-width="20.2"/>
<path d="M1079.1 731.4 L1072.8 728.9 L1061.5 728.7 L1053.9 730.2 L1047.0 734.6 L1042.6 740.2 L1040.1 746.5 L1038.9 752.8 L1041.4 761.6 L1045.1 767.9 L1050.8 772.9" stroke="#529a97" stroke-width="28.7"/>
<path d="M1050.8 772.9 L1060.0 778.0 L1071.5 780.6" stroke="#529a97" stroke-width="24.2"/>
<path d="M1071.5 780.6 L1020.0 782.3 L960.0 783.4 L889.5 784.2" stroke="#529a97" stroke-width="29.2"/>
<path d="M889.5 784.2 L886.0 780.0 L885.5 752.0" stroke="#529a97" stroke-width="12.2"/>
<path d="M885.5 752.0 L881.0 746.0 L876.7 741.5 L869.1 736.5 L860.3 734.6 L850.3 735.9 L844.0 739.6 L838.0 746.0" stroke="#529a97" stroke-width="28.2"/>
<path d="M838.0 746.0 L834.5 754.0 L833.5 762.0 L836.0 771.0 L841.0 778.0 L850.3 785.5" stroke="#529a97" stroke-width="28.2"/>
<path d="M850.3 785.5 L745.5 784.8 L680.0 785.5 L432.0 788.5" stroke="#529a97" stroke-width="30.2"/>
<path d="M432.0 788.5 L431.5 694.3" stroke="#529a97" stroke-width="29.2"/>
<path d="M431.5 694.3 L460.5 694.3" stroke="#529a97" stroke-width="29.2"/>
<path d="M460.5 695.8 L460.5 669.3" stroke="#529a97" stroke-width="29.0"/>
<path d="M462.8 671.6 L430.6 671.6" stroke="#529a97" stroke-width="28.9"/>
<path d="M430.6 671.6 L428.3 554.0" stroke="#529a97" stroke-width="29.2"/>
<path d="M428.3 554.0 L426.0 452.0" stroke="#529a97" stroke-width="30.7"/>
<path d="M426.0 452.0 L440.0 443.0" stroke="#529a97" stroke-width="30.2"/>
<path d="M440.0 443.0 L452.5 434.0 L440.0 427.0" stroke="#529a97" stroke-width="29.7"/>
<path d="M440.0 427.0 L428.0 419.5" stroke="#529a97" stroke-width="29.7"/>
<path d="M587.8 356.0 L588.8 434.5" stroke="#529a97" stroke-width="33.6"/>
<path d="M588.8 434.0 L631.0 433.0" stroke="#529a97" stroke-width="32.2"/>
<path d="M429.0 555.6 L521.6 554.3" stroke="#529a97" stroke-width="31.0"/>
<path d="M636.4 552.9 L680.4 550.4 L745.4 594.0" stroke="#529a97" stroke-width="30.7"/>
<path d="M744.3 590.5 L746.0 784.8" stroke="#529a97" stroke-width="32.2"/>
<path d="M727.0 428.1 L765.3 428.1" stroke="#529a97" stroke-width="33.8"/>
<path d="M765.3 428.3 L807.5 456.3" stroke="#529a97" stroke-width="32.2"/>
<path d="M806.5 456.5 L898.0 437.8" stroke="#529a97" stroke-width="35.2"/>
<path d="M896.2 438.6 L930.0 448.6 L960.0 456.6" stroke="#529a97" stroke-width="31.2"/>
<path d="M960.0 456.6 L1000.0 467.1 L1029.8 474.7 L1091.3 459.6 L1105.0 461.0 L1120.0 463.6 L1150.0 472.5 L1189.9 484.6 L1197.4 486.5" stroke="#529a97" stroke-width="29.7"/>
<path d="M896.6 393.9 L896.6 437.0" stroke="#529a97" stroke-width="31.5"/>
<path d="M1033.2 305.0 L1033.2 322.0" stroke="#529a97" stroke-width="28.6"/>
<path d="M1030.4 320.0 L1030.4 391.0" stroke="#529a97" stroke-width="34.2"/>
<path d="M946.8 591.0 L887.8 591.0" stroke="#529a97" stroke-width="33.7"/>
<path d="M887.8 591.0 L891.0 700.0 L892.4 784.0" stroke="#529a97" stroke-width="31.7"/>
<path d="M1023.3 589.2 L1092.7 589.2" stroke="#529a97" stroke-width="34.9"/>
<path d="M1092.7 589.2 L1093.6 630.0 L1095.2 680.0 L1095.5 722.0" stroke="#529a97" stroke-width="34.7"/>
<path d="M1093.2 722.0 L1093.2 755.0" stroke="#529a97" stroke-width="28.2"/>
<path d="M596.0 667.0 L618.6 666.6 L619.0 688.6 L596.4 689.0 Z" stroke="#529a97" stroke-width="29.2"/>
<path d="M797.2 471.6 L797.0 474.3 L796.5 477.0 L795.6 479.6 L794.4 482.1 L792.9 484.3 L791.1 486.4 L789.0 488.2 L786.8 489.7 L784.3 490.9 L781.7 491.8 L779.0 492.3 L776.3 492.5 L773.6 492.3 L770.9 491.8 L768.3 490.9 L765.8 489.7 L763.6 488.2 L761.5 486.4 L759.7 484.3 L758.2 482.1 L757.0 479.6 L756.1 477.0 L755.6 474.3 L755.4 471.6 L755.6 468.9 L756.1 466.2 L757.0 463.6 L758.2 461.2 L759.7 458.9 L761.5 456.8 L763.6 455.0 L765.8 453.5 L768.3 452.3 L770.9 451.4 L773.6 450.9 L776.3 450.7 L779.0 450.9 L781.7 451.4 L784.3 452.3 L786.7 453.5 L789.0 455.0 L791.1 456.8 L792.9 458.9 L794.4 461.2 L795.6 463.6 L796.5 466.2 L797.0 468.9 Z" stroke="#529a97" stroke-width="29.2"/>
<path d="M584 288.6 L640 287.8 L640 291.6 L584 292.4 Z" fill="#529a97" stroke="none"/><path d="M590 293.2 L630 292.6" stroke="#8a6b74" stroke-width="2"/>
<path d="M408.2 297.5 L413 291.3 L426 291.1 L426 308 L408.2 308 Z M416.6 789 L416.6 804.5 L419 807.8 L433 807.6 L433 789 Z" fill="#529a97" stroke="none"/>
</g>
<path d="M428.0 419.5 L426.5 360.0 L425.5 308.0 L584.8 305.8 L583.8 303.2 L583.8 356.0 L582.7 356.3 L643.0 356.3 L639.2 358.6 L639.2 304.5 L680.0 303.3 L960.0 299.6 L1000.9 300.8 L996.0 306.5 L982.6 314.6 L977.0 322.8 L975.7 332.8 L978.9 342.9 L986.4 351.7 L996.5 356.7 L1006.5 356.7 L1015.3 353.0 L1021.6 345.4 L1026.0 339.0 L1029.0 330.0 L1031.5 320.0 L1033.2 307.0 L1031.0 307.0 L1110.0 307.1 L1176.6 308.0 L1152.7 324.0 L1149.0 326.6 L1147.1 335.4 L1149.0 346.7 L1155.2 354.3 L1162.8 359.3 L1172.8 359.3 L1177.9 356.8 L1197.7 343.5 L1200.0 488.0 L1180.0 487.5 L1167.9 487.8 L1159.1 491.5 L1152.8 497.8 L1149.0 506.6 L1149.0 515.4 L1151.5 523.0 L1156.6 529.2 L1164.1 533.6 L1172.9 534.3 L1195.5 523.0 L1201.5 519.5 L1202.6 640.0 L1202.6 741.0 L1159.5 782.6 L1099.2 783.0 L1098.6 762.0 L1095.0 756.0 L1091.6 752.8 L1087.9 746.5 L1081.6 737.7 L1079.1 731.4 L1072.8 728.9 L1061.5 728.7 L1053.9 730.2 L1047.0 734.6 L1042.6 740.2 L1040.1 746.5 L1038.9 752.8 L1041.4 761.6 L1045.1 767.9 L1050.8 772.9 L1060.0 778.0 L1071.5 780.6 L1020.0 782.3 L960.0 783.4 L889.5 784.2 L886.0 780.0 L885.5 752.0 L881.0 746.0 L876.7 741.5 L869.1 736.5 L860.3 734.6 L850.3 735.9 L844.0 739.6 L838.0 746.0 L834.5 754.0 L833.5 762.0 L836.0 771.0 L841.0 778.0 L850.3 785.5 L745.5 784.8 L680.0 785.5 L432.0 788.5 L431.5 694.3 L460.5 694.3 L460.5 695.8 L460.5 669.3 L462.8 671.6 L430.6 671.6 L428.3 554.0 L426.0 452.0 L440.0 443.0 L452.5 434.0 L440.0 427.0 L428.0 419.5 Z M593.9 664.1 L621.0 663.7 L621.4 690.7 L594.3 691.1 Z M797.2 471.6 L797.0 474.3 L796.5 477.0 L795.6 479.6 L794.4 482.1 L792.9 484.3 L791.1 486.4 L789.0 488.2 L786.8 489.7 L784.3 490.9 L781.7 491.8 L779.0 492.3 L776.3 492.5 L773.6 492.3 L770.9 491.8 L768.3 490.9 L765.8 489.7 L763.6 488.2 L761.5 486.4 L759.7 484.3 L758.2 482.1 L757.0 479.6 L756.1 477.0 L755.6 474.3 L755.4 471.6 L755.6 468.9 L756.1 466.2 L757.0 463.6 L758.2 461.2 L759.7 458.9 L761.5 456.8 L763.6 455.0 L765.8 453.5 L768.3 452.3 L770.9 451.4 L773.6 450.9 L776.3 450.7 L779.0 450.9 L781.7 451.4 L784.3 452.3 L786.7 453.5 L789.0 455.0 L791.1 456.8 L792.9 458.9 L794.4 461.2 L795.6 463.6 L796.5 466.2 L797.0 468.9 Z" fill="#c0c0c0" fill-rule="evenodd"/>
<g clip-path="url(#fc)" fill="none" stroke-linejoin="round" stroke-linecap="round">
<path d="M428.0 419.5 L426.5 360.0 L425.5 308.0 L584.8 305.8" stroke="#e8b6c2" stroke-width="33.9"/>
<path d="M583.8 303.2 L583.8 356.0" stroke="#e8b6c2" stroke-width="30.6"/>
<path d="M582.7 356.3 L643.0 356.3" stroke="#e8b6c2" stroke-width="33.1"/>
<path d="M639.2 358.6 L639.2 304.5" stroke="#e8b6c2" stroke-width="35.9"/>
<path d="M639.2 304.5 L680.0 303.3 L960.0 299.6 L1000.9 300.8" stroke="#e8b6c2" stroke-width="34.9"/>
<path d="M1000.9 300.8 L996.0 306.5 L982.6 314.6 L977.0 322.8 L975.7 332.8 L978.9 342.9 L986.4 351.7 L996.5 356.7 L1006.5 356.7 L1015.3 353.0 L1021.6 345.4 L1026.0 339.0" stroke="#e8b6c2" stroke-width="33.4"/>
<path d="M1026.0 339.0 L1029.0 330.0 L1031.5 320.0 L1033.2 307.0" stroke="#e8b6c2" stroke-width="28.4"/>
<path d="M1031.0 307.0 L1110.0 307.1 L1176.6 308.0" stroke="#e8b6c2" stroke-width="32.9"/>
<path d="M1176.6 308.0 L1152.7 324.0 L1149.0 326.6" stroke="#e8b6c2" stroke-width="28.4"/>
<path d="M1149.0 326.6 L1147.1 335.4 L1149.0 346.7 L1155.2 354.3 L1162.8 359.3 L1172.8 359.3 L1177.9 356.8" stroke="#e8b6c2" stroke-width="33.4"/>
<path d="M1177.9 356.8 L1197.7 343.5" stroke="#e8b6c2" stroke-width="28.4"/>
<path d="M1197.7 343.5 L1200.0 488.0" stroke="#e8b6c2" stroke-width="34.4"/>
<path d="M1200.0 488.0 L1180.0 487.5 L1167.9 487.8" stroke="#e8b6c2" stroke-width="28.4"/>
<path d="M1167.9 487.8 L1159.1 491.5 L1152.8 497.8 L1149.0 506.6 L1149.0 515.4 L1151.5 523.0 L1156.6 529.2 L1164.1 533.6 L1172.9 534.3" stroke="#e8b6c2" stroke-width="33.4"/>
<path d="M1172.9 534.3 L1195.5 523.0 L1201.5 519.5" stroke="#e8b6c2" stroke-width="28.4"/>
<path d="M1201.5 519.5 L1202.6 640.0" stroke="#e8b6c2" stroke-width="34.9"/>
<path d="M1202.6 640.0 L1202.6 741.0" stroke="#e8b6c2" stroke-width="33.0"/>
<path d="M1202.6 741.0 L1159.5 782.6" stroke="#e8b6c2" stroke-width="33.0"/>
<path d="M1159.5 782.6 L1099.2 783.0" stroke="#e8b6c2" stroke-width="32.4"/>
<path d="M1099.2 783.0 L1098.6 762.0 L1095.0 756.0" stroke="#e8b6c2" stroke-width="22.4"/>
<path d="M1095.0 756.0 L1091.6 752.8 L1087.9 746.5 L1081.6 737.7 L1079.1 731.4" stroke="#e8b6c2" stroke-width="24.4"/>
<path d="M1079.1 731.4 L1072.8 728.9 L1061.5 728.7 L1053.9 730.2 L1047.0 734.6 L1042.6 740.2 L1040.1 746.5 L1038.9 752.8 L1041.4 761.6 L1045.1 767.9 L1050.8 772.9" stroke="#e8b6c2" stroke-width="32.9"/>
<path d="M1050.8 772.9 L1060.0 778.0 L1071.5 780.6" stroke="#e8b6c2" stroke-width="28.4"/>
<path d="M1071.5 780.6 L1020.0 782.3 L960.0 783.4 L889.5 784.2" stroke="#e8b6c2" stroke-width="33.4"/>
<path d="M889.5 784.2 L886.0 780.0 L885.5 752.0" stroke="#e8b6c2" stroke-width="16.4"/>
<path d="M885.5 752.0 L881.0 746.0 L876.7 741.5 L869.1 736.5 L860.3 734.6 L850.3 735.9 L844.0 739.6 L838.0 746.0" stroke="#e8b6c2" stroke-width="32.4"/>
<path d="M838.0 746.0 L834.5 754.0 L833.5 762.0 L836.0 771.0 L841.0 778.0 L850.3 785.5" stroke="#e8b6c2" stroke-width="32.4"/>
<path d="M850.3 785.5 L745.5 784.8 L680.0 785.5 L432.0 788.5" stroke="#e8b6c2" stroke-width="34.4"/>
<path d="M432.0 788.5 L431.5 694.3" stroke="#e8b6c2" stroke-width="33.4"/>
<path d="M431.5 694.3 L460.5 694.3" stroke="#e8b6c2" stroke-width="33.4"/>
<path d="M460.5 695.8 L460.5 669.3" stroke="#e8b6c2" stroke-width="33.2"/>
<path d="M462.8 671.6 L430.6 671.6" stroke="#e8b6c2" stroke-width="33.1"/>
<path d="M430.6 671.6 L428.3 554.0" stroke="#e8b6c2" stroke-width="33.4"/>
<path d="M428.3 554.0 L426.0 452.0" stroke="#e8b6c2" stroke-width="34.9"/>
<path d="M426.0 452.0 L440.0 443.0" stroke="#e8b6c2" stroke-width="34.4"/>
<path d="M440.0 443.0 L452.5 434.0 L440.0 427.0" stroke="#e8b6c2" stroke-width="33.9"/>
<path d="M440.0 427.0 L428.0 419.5" stroke="#e8b6c2" stroke-width="33.9"/>
<path d="M587.8 356.0 L588.8 434.5" stroke="#e8b6c2" stroke-width="37.8"/>
<path d="M588.8 434.0 L631.0 433.0" stroke="#e8b6c2" stroke-width="36.4"/>
<path d="M429.0 555.6 L521.6 554.3" stroke="#e8b6c2" stroke-width="35.2"/>
<path d="M636.4 552.9 L680.4 550.4 L745.4 594.0" stroke="#e8b6c2" stroke-width="34.9"/>
<path d="M744.3 590.5 L746.0 784.8" stroke="#e8b6c2" stroke-width="36.4"/>
<path d="M727.0 428.1 L765.3 428.1" stroke="#e8b6c2" stroke-width="38.0"/>
<path d="M765.3 428.3 L807.5 456.3" stroke="#e8b6c2" stroke-width="36.4"/>
<path d="M806.5 456.5 L898.0 437.8" stroke="#e8b6c2" stroke-width="39.4"/>
<path d="M896.2 438.6 L930.0 448.6 L960.0 456.6" stroke="#e8b6c2" stroke-width="35.4"/>
<path d="M960.0 456.6 L1000.0 467.1 L1029.8 474.7 L1091.3 459.6 L1105.0 461.0 L1120.0 463.6 L1150.0 472.5 L1189.9 484.6 L1197.4 486.5" stroke="#e8b6c2" stroke-width="33.9"/>
<path d="M896.6 393.9 L896.6 437.0" stroke="#e8b6c2" stroke-width="35.7"/>
<path d="M1033.2 305.0 L1033.2 322.0" stroke="#e8b6c2" stroke-width="32.8"/>
<path d="M1030.4 320.0 L1030.4 391.0" stroke="#e8b6c2" stroke-width="38.4"/>
<path d="M946.8 591.0 L887.8 591.0" stroke="#e8b6c2" stroke-width="37.9"/>
<path d="M887.8 591.0 L891.0 700.0 L892.4 784.0" stroke="#e8b6c2" stroke-width="35.9"/>
<path d="M1023.3 589.2 L1092.7 589.2" stroke="#e8b6c2" stroke-width="39.1"/>
<path d="M1092.7 589.2 L1093.6 630.0 L1095.2 680.0 L1095.5 722.0" stroke="#e8b6c2" stroke-width="38.9"/>
<path d="M1093.2 722.0 L1093.2 755.0" stroke="#e8b6c2" stroke-width="32.4"/>
<path d="M596.0 667.0 L618.6 666.6 L619.0 688.6 L596.4 689.0 Z" stroke="#e8b6c2" stroke-width="33.4"/>
<path d="M797.2 471.6 L797.0 474.3 L796.5 477.0 L795.6 479.6 L794.4 482.1 L792.9 484.3 L791.1 486.4 L789.0 488.2 L786.8 489.7 L784.3 490.9 L781.7 491.8 L779.0 492.3 L776.3 492.5 L773.6 492.3 L770.9 491.8 L768.3 490.9 L765.8 489.7 L763.6 488.2 L761.5 486.4 L759.7 484.3 L758.2 482.1 L757.0 479.6 L756.1 477.0 L755.6 474.3 L755.4 471.6 L755.6 468.9 L756.1 466.2 L757.0 463.6 L758.2 461.2 L759.7 458.9 L761.5 456.8 L763.6 455.0 L765.8 453.5 L768.3 452.3 L770.9 451.4 L773.6 450.9 L776.3 450.7 L779.0 450.9 L781.7 451.4 L784.3 452.3 L786.7 453.5 L789.0 455.0 L791.1 456.8 L792.9 458.9 L794.4 461.2 L795.6 463.6 L796.5 466.2 L797.0 468.9 Z" stroke="#e8b6c2" stroke-width="33.4"/>
<path d="M428.0 419.5 L426.5 360.0 L425.5 308.0 L584.8 305.8" stroke="#b5ecea" stroke-width="28.7"/>
<path d="M583.8 303.2 L583.8 356.0" stroke="#b5ecea" stroke-width="25.4"/>
<path d="M582.7 356.3 L643.0 356.3" stroke="#b5ecea" stroke-width="27.9"/>
<path d="M639.2 358.6 L639.2 304.5" stroke="#b5ecea" stroke-width="30.7"/>
<path d="M639.2 304.5 L680.0 303.3 L960.0 299.6 L1000.9 300.8" stroke="#b5ecea" stroke-width="29.7"/>
<path d="M1000.9 300.8 L996.0 306.5 L982.6 314.6 L977.0 322.8 L975.7 332.8 L978.9 342.9 L986.4 351.7 L996.5 356.7 L1006.5 356.7 L1015.3 353.0 L1021.6 345.4 L1026.0 339.0" stroke="#b5ecea" stroke-width="28.2"/>
<path d="M1026.0 339.0 L1029.0 330.0 L1031.5 320.0 L1033.2 307.0" stroke="#b5ecea" stroke-width="23.2"/>
<path d="M1031.0 307.0 L1110.0 307.1 L1176.6 308.0" stroke="#b5ecea" stroke-width="27.7"/>
<path d="M1176.6 308.0 L1152.7 324.0 L1149.0 326.6" stroke="#b5ecea" stroke-width="23.2"/>
<path d="M1149.0 326.6 L1147.1 335.4 L1149.0 346.7 L1155.2 354.3 L1162.8 359.3 L1172.8 359.3 L1177.9 356.8" stroke="#b5ecea" stroke-width="28.2"/>
<path d="M1177.9 356.8 L1197.7 343.5" stroke="#b5ecea" stroke-width="23.2"/>
<path d="M1197.7 343.5 L1200.0 488.0" stroke="#b5ecea" stroke-width="29.2"/>
<path d="M1200.0 488.0 L1180.0 487.5 L1167.9 487.8" stroke="#b5ecea" stroke-width="23.2"/>
<path d="M1167.9 487.8 L1159.1 491.5 L1152.8 497.8 L1149.0 506.6 L1149.0 515.4 L1151.5 523.0 L1156.6 529.2 L1164.1 533.6 L1172.9 534.3" stroke="#b5ecea" stroke-width="28.2"/>
<path d="M1172.9 534.3 L1195.5 523.0 L1201.5 519.5" stroke="#b5ecea" stroke-width="23.2"/>
<path d="M1201.5 519.5 L1202.6 640.0" stroke="#b5ecea" stroke-width="29.7"/>
<path d="M1202.6 640.0 L1202.6 741.0" stroke="#b5ecea" stroke-width="27.8"/>
<path d="M1202.6 741.0 L1159.5 782.6" stroke="#b5ecea" stroke-width="27.8"/>
<path d="M1159.5 782.6 L1099.2 783.0" stroke="#b5ecea" stroke-width="27.2"/>
<path d="M1099.2 783.0 L1098.6 762.0 L1095.0 756.0" stroke="#b5ecea" stroke-width="17.2"/>
<path d="M1095.0 756.0 L1091.6 752.8 L1087.9 746.5 L1081.6 737.7 L1079.1 731.4" stroke="#b5ecea" stroke-width="19.2"/>
<path d="M1079.1 731.4 L1072.8 728.9 L1061.5 728.7 L1053.9 730.2 L1047.0 734.6 L1042.6 740.2 L1040.1 746.5 L1038.9 752.8 L1041.4 761.6 L1045.1 767.9 L1050.8 772.9" stroke="#b5ecea" stroke-width="27.7"/>
<path d="M1050.8 772.9 L1060.0 778.0 L1071.5 780.6" stroke="#b5ecea" stroke-width="23.2"/>
<path d="M1071.5 780.6 L1020.0 782.3 L960.0 783.4 L889.5 784.2" stroke="#b5ecea" stroke-width="28.2"/>
<path d="M889.5 784.2 L886.0 780.0 L885.5 752.0" stroke="#b5ecea" stroke-width="11.2"/>
<path d="M885.5 752.0 L881.0 746.0 L876.7 741.5 L869.1 736.5 L860.3 734.6 L850.3 735.9 L844.0 739.6 L838.0 746.0" stroke="#b5ecea" stroke-width="27.2"/>
<path d="M838.0 746.0 L834.5 754.0 L833.5 762.0 L836.0 771.0 L841.0 778.0 L850.3 785.5" stroke="#b5ecea" stroke-width="27.2"/>
<path d="M850.3 785.5 L745.5 784.8 L680.0 785.5 L432.0 788.5" stroke="#b5ecea" stroke-width="29.2"/>
<path d="M432.0 788.5 L431.5 694.3" stroke="#b5ecea" stroke-width="28.2"/>
<path d="M431.5 694.3 L460.5 694.3" stroke="#b5ecea" stroke-width="28.2"/>
<path d="M460.5 695.8 L460.5 669.3" stroke="#b5ecea" stroke-width="28.0"/>
<path d="M462.8 671.6 L430.6 671.6" stroke="#b5ecea" stroke-width="27.9"/>
<path d="M430.6 671.6 L428.3 554.0" stroke="#b5ecea" stroke-width="28.2"/>
<path d="M428.3 554.0 L426.0 452.0" stroke="#b5ecea" stroke-width="29.7"/>
<path d="M426.0 452.0 L440.0 443.0" stroke="#b5ecea" stroke-width="29.2"/>
<path d="M440.0 443.0 L452.5 434.0 L440.0 427.0" stroke="#b5ecea" stroke-width="28.7"/>
<path d="M440.0 427.0 L428.0 419.5" stroke="#b5ecea" stroke-width="28.7"/>
<path d="M587.8 356.0 L588.8 434.5" stroke="#b5ecea" stroke-width="32.6"/>
<path d="M588.8 434.0 L631.0 433.0" stroke="#b5ecea" stroke-width="31.2"/>
<path d="M429.0 555.6 L521.6 554.3" stroke="#b5ecea" stroke-width="30.0"/>
<path d="M636.4 552.9 L680.4 550.4 L745.4 594.0" stroke="#b5ecea" stroke-width="29.7"/>
<path d="M744.3 590.5 L746.0 784.8" stroke="#b5ecea" stroke-width="31.2"/>
<path d="M727.0 428.1 L765.3 428.1" stroke="#b5ecea" stroke-width="32.8"/>
<path d="M765.3 428.3 L807.5 456.3" stroke="#b5ecea" stroke-width="31.2"/>
<path d="M806.5 456.5 L898.0 437.8" stroke="#b5ecea" stroke-width="34.2"/>
<path d="M896.2 438.6 L930.0 448.6 L960.0 456.6" stroke="#b5ecea" stroke-width="30.2"/>
<path d="M960.0 456.6 L1000.0 467.1 L1029.8 474.7 L1091.3 459.6 L1105.0 461.0 L1120.0 463.6 L1150.0 472.5 L1189.9 484.6 L1197.4 486.5" stroke="#b5ecea" stroke-width="28.7"/>
<path d="M896.6 393.9 L896.6 437.0" stroke="#b5ecea" stroke-width="30.5"/>
<path d="M1033.2 305.0 L1033.2 322.0" stroke="#b5ecea" stroke-width="27.6"/>
<path d="M1030.4 320.0 L1030.4 391.0" stroke="#b5ecea" stroke-width="33.2"/>
<path d="M946.8 591.0 L887.8 591.0" stroke="#b5ecea" stroke-width="32.7"/>
<path d="M887.8 591.0 L891.0 700.0 L892.4 784.0" stroke="#b5ecea" stroke-width="30.7"/>
<path d="M1023.3 589.2 L1092.7 589.2" stroke="#b5ecea" stroke-width="33.9"/>
<path d="M1092.7 589.2 L1093.6 630.0 L1095.2 680.0 L1095.5 722.0" stroke="#b5ecea" stroke-width="33.7"/>
<path d="M1093.2 722.0 L1093.2 755.0" stroke="#b5ecea" stroke-width="27.2"/>
<path d="M596.0 667.0 L618.6 666.6 L619.0 688.6 L596.4 689.0 Z" stroke="#b5ecea" stroke-width="28.2"/>
<path d="M797.2 471.6 L797.0 474.3 L796.5 477.0 L795.6 479.6 L794.4 482.1 L792.9 484.3 L791.1 486.4 L789.0 488.2 L786.8 489.7 L784.3 490.9 L781.7 491.8 L779.0 492.3 L776.3 492.5 L773.6 492.3 L770.9 491.8 L768.3 490.9 L765.8 489.7 L763.6 488.2 L761.5 486.4 L759.7 484.3 L758.2 482.1 L757.0 479.6 L756.1 477.0 L755.6 474.3 L755.4 471.6 L755.6 468.9 L756.1 466.2 L757.0 463.6 L758.2 461.2 L759.7 458.9 L761.5 456.8 L763.6 455.0 L765.8 453.5 L768.3 452.3 L770.9 451.4 L773.6 450.9 L776.3 450.7 L779.0 450.9 L781.7 451.4 L784.3 452.3 L786.7 453.5 L789.0 455.0 L791.1 456.8 L792.9 458.9 L794.4 461.2 L795.6 463.6 L796.5 466.2 L797.0 468.9 Z" stroke="#b5ecea" stroke-width="28.2"/>
</g>
<g fill="none" stroke="#38033b" stroke-linejoin="miter" stroke-linecap="butt">
<path d="M428.0 419.5 L426.5 360.0 L425.5 308.0 L584.8 305.8" stroke-width="5.5"/>
<path d="M583.8 303.2 L583.8 356.0" stroke-width="2.2"/>
<path d="M582.7 356.3 L643.0 356.3" stroke-width="4.7"/>
<path d="M639.2 358.6 L639.2 304.5" stroke-width="7.5"/>
<path d="M639.2 304.5 L680.0 303.3 L960.0 299.6 L1000.9 300.8" stroke-width="6.5"/>
<path d="M1000.9 300.8 L996.0 306.5 L982.6 314.6 L977.0 322.8 L975.7 332.8 L978.9 342.9 L986.4 351.7 L996.5 356.7 L1006.5 356.7 L1015.3 353.0 L1021.6 345.4 L1026.0 339.0" stroke-width="5"/>
<path d="M1031.0 307.0 L1110.0 307.1 L1176.6 308.0" stroke-width="4.5"/>
<path d="M1149.0 326.6 L1147.1 335.4 L1149.0 346.7 L1155.2 354.3 L1162.8 359.3 L1172.8 359.3 L1177.9 356.8" stroke-width="5"/>
<path d="M1197.7 343.5 L1200.0 488.0" stroke-width="6"/>
<path d="M1167.9 487.8 L1159.1 491.5 L1152.8 497.8 L1149.0 506.6 L1149.0 515.4 L1151.5 523.0 L1156.6 529.2 L1164.1 533.6 L1172.9 534.3" stroke-width="5"/>
<path d="M1201.5 519.5 L1202.6 640.0" stroke-width="6.5"/>
<path d="M1202.6 640.0 L1202.6 741.0" stroke-width="4.6"/>
<path d="M1202.6 741.0 L1159.5 782.6" stroke-width="4.6"/>
<path d="M1159.5 782.6 L1099.2 783.0" stroke-width="4"/>
<path d="M1079.1 731.4 L1072.8 728.9 L1061.5 728.7 L1053.9 730.2 L1047.0 734.6 L1042.6 740.2 L1040.1 746.5 L1038.9 752.8 L1041.4 761.6 L1045.1 767.9 L1050.8 772.9" stroke-width="4.5"/>
<path d="M1071.5 780.6 L1020.0 782.3 L960.0 783.4 L889.5 784.2" stroke-width="5"/>
<path d="M838.0 746.0 L834.5 754.0 L833.5 762.0 L836.0 771.0 L841.0 778.0 L850.3 785.5" stroke-width="4"/>
<path d="M850.3 785.5 L745.5 784.8 L680.0 785.5 L432.0 788.5" stroke-width="6"/>
<path d="M432.0 788.5 L431.5 694.3" stroke-width="5"/>
<path d="M431.5 694.3 L460.5 694.3" stroke-width="3"/>
<path d="M460.5 695.8 L460.5 669.3" stroke-width="4.8"/>
<path d="M462.8 671.6 L430.6 671.6" stroke-width="4.7"/>
<path d="M430.6 671.6 L428.3 554.0" stroke-width="5"/>
<path d="M428.3 554.0 L426.0 452.0" stroke-width="6.5"/>
<path d="M426.0 452.0 L440.0 443.0" stroke-width="6"/>
<path d="M440.0 443.0 L452.5 434.0 L440.0 427.0" stroke-width="5.5"/>
<path d="M440.0 427.0 L428.0 419.5" stroke-width="3.5"/>
<path d="M587.8 356.0 L588.8 434.5" stroke-width="9.4"/>
<path d="M588.8 434.0 L631.0 433.0" stroke-width="8"/>
<path d="M429.0 555.6 L521.6 554.3" stroke-width="6.8"/>
<path d="M636.4 552.9 L680.4 550.4 L745.4 594.0" stroke-width="6.5"/>
<path d="M744.3 590.5 L746.0 784.8" stroke-width="8"/>
<path d="M727.0 428.1 L765.3 428.1" stroke-width="9.6"/>
<path d="M765.3 428.3 L807.5 456.3" stroke-width="8"/>
<path d="M806.5 456.5 L898.0 437.8" stroke-width="11"/>
<path d="M896.2 438.6 L930.0 448.6 L960.0 456.6" stroke-width="7"/>
<path d="M960.0 456.6 L1000.0 467.1 L1029.8 474.7 L1091.3 459.6 L1105.0 461.0 L1120.0 463.6 L1150.0 472.5 L1189.9 484.6 L1197.4 486.5" stroke-width="5.5"/>
<path d="M896.6 393.9 L896.6 437.0" stroke-width="7.3"/>
<path d="M1033.2 305.0 L1033.2 322.0" stroke-width="4.4"/>
<path d="M1030.4 320.0 L1030.4 391.0" stroke-width="10"/>
<path d="M946.8 591.0 L887.8 591.0" stroke-width="9.5"/>
<path d="M887.8 591.0 L891.0 700.0 L892.4 784.0" stroke-width="7.5"/>
<path d="M1023.3 589.2 L1092.7 589.2" stroke-width="10.7"/>
<path d="M1092.7 589.2 L1093.6 630.0 L1095.2 680.0 L1095.5 722.0" stroke-width="10.5"/>
<path d="M1093.2 722.0 L1093.2 755.0" stroke-width="4"/>
<path d="M593.9 664.1 L621.0 663.7 L621.4 690.7 L594.3 691.1 Z" fill="#38033b" stroke="none"/><path d="M599.0 669.8 L618.7 669.5 L619.0 688.6 L599.3 688.9 Z" fill="#529a97" stroke="none"/><path d="M599 670.9 L618.7 670.6" stroke="#8a6a9a" stroke-width="2.3"/>
<path d="M797.2 471.6 L797.0 474.3 L796.5 477.0 L795.6 479.6 L794.4 482.1 L792.9 484.3 L791.1 486.4 L789.0 488.2 L786.8 489.7 L784.3 490.9 L781.7 491.8 L779.0 492.3 L776.3 492.5 L773.6 492.3 L770.9 491.8 L768.3 490.9 L765.8 489.7 L763.6 488.2 L761.5 486.4 L759.7 484.3 L758.2 482.1 L757.0 479.6 L756.1 477.0 L755.6 474.3 L755.4 471.6 L755.6 468.9 L756.1 466.2 L757.0 463.6 L758.2 461.2 L759.7 458.9 L761.5 456.8 L763.6 455.0 L765.8 453.5 L768.3 452.3 L770.9 451.4 L773.6 450.9 L776.3 450.7 L779.0 450.9 L781.7 451.4 L784.3 452.3 L786.7 453.5 L789.0 455.0 L791.1 456.8 L792.9 458.9 L794.4 461.2 L795.6 463.6 L796.5 466.2 L797.0 468.9 Z" stroke-width="5.5" fill="#529a97"/><rect x="774" y="469.2" width="5" height="5" fill="#8a6b74" stroke="none"/>
</g>
<rect x="425.2" y="416.8" width="5.5" height="5.5" fill="#38033b"/>
<rect x="635.5" y="300.8" width="7.5" height="7.5" fill="#38033b"/>
<rect x="997.6" y="297.6" width="6.5" height="6.5" fill="#38033b"/>
<rect x="1199.3" y="636.8" width="6.5" height="6.5" fill="#38033b"/>
<rect x="1200.3" y="738.7" width="4.6" height="4.6" fill="#38033b"/>
<rect x="1157.2" y="780.3" width="4.6" height="4.6" fill="#38033b"/>
<rect x="847.3" y="782.5" width="6.0" height="6.0" fill="#38033b"/>
<rect x="429.0" y="785.5" width="6.0" height="6.0" fill="#38033b"/>
<rect x="429.0" y="691.8" width="5.0" height="5.0" fill="#38033b"/>
<rect x="428.1" y="669.1" width="5.0" height="5.0" fill="#38033b"/>
<rect x="425.1" y="550.8" width="6.5" height="6.5" fill="#38033b"/>
<rect x="422.8" y="448.8" width="6.5" height="6.5" fill="#38033b"/>
<rect x="437.0" y="440.0" width="6.0" height="6.0" fill="#38033b"/>
<rect x="437.2" y="424.2" width="5.5" height="5.5" fill="#38033b"/>
<rect x="584.1" y="429.8" width="9.4" height="9.4" fill="#38033b"/>
<rect x="760.5" y="423.3" width="9.6" height="9.6" fill="#38033b"/>
<rect x="956.5" y="453.1" width="7.0" height="7.0" fill="#38033b"/>
<rect x="883.0" y="586.2" width="9.5" height="9.5" fill="#38033b"/>
<rect x="1087.4" y="583.9" width="10.7" height="10.7" fill="#38033b"/>
<g fill="none" stroke-linecap="butt">
<path d="M432 555.7 L514 554.6" stroke="#f3b9f1" stroke-width="2.2" stroke-dasharray="6 3 3 3 8 4 2 3"/>
<path d="M640 552.6 L678 550.6" stroke="#f3b9f1" stroke-width="2.2" stroke-dasharray="5 4 4 3 3 4"/>
<path d="M814 455.6 L892 439.5" stroke="#529a97" stroke-width="3" stroke-dasharray="22 5 30 4"/><path d="M789 443 L798 449.5" stroke="#529a97" stroke-width="2.4"/>
<path d="M886 591.3 L932 591.3 M936 591.3 L941 591.3" stroke="#529a97" stroke-width="2.4"/>
<path d="M1092.4 589 L1092.6 597" stroke="#529a97" stroke-width="2.4"/>
<path d="M1096 700 L1097 760" stroke="#529a97" stroke-width="2.2" stroke-dasharray="3 6"/>
<path d="M1030.2 326 L1030.2 388" stroke="#b5ecea" stroke-width="2.4" stroke-dasharray="14 5 22 4 10 30"/>
<path d="M962 300.2 L1000 300.6" stroke="#b5ecea" stroke-width="2.4" stroke-dasharray="5 3 3 2"/>
</g>
<g clip-path="url(#lc)" fill="none" stroke-linecap="butt" stroke-linejoin="round">
<path d="M764.4 602 L766.2 749" stroke="#d8365a" stroke-width="2.4" stroke-dasharray="6 2.5"/>
<path d="M871 600 L872.8 722" stroke="#d8365a" stroke-width="2.4" stroke-dasharray="6 2.5"/>
<path d="M830.5 748 L831.5 737 L835 729.5 L840.2 723.9 L850.3 720.8 L867.9 720.2 L873.4 723.5" stroke="#d8365a" stroke-width="2.4" stroke-dasharray="6 2.5"/>
<path d="M748.6 596 L750.4 752" stroke="#00ffff" stroke-opacity=".76" stroke-width="29.5"/>
<path d="M887.8 596 L890.2 752" stroke="#00ffff" stroke-opacity=".76" stroke-width="29.5"/>
<path d="M891 749 L884 746.5 L876.7 741.5 L869.1 736.5 L860.3 734.6 L850.3 735.9 L845 739.4" stroke="#00ffff" stroke-opacity=".76" stroke-width="29.5" stroke-linecap="round"/>
<path d="M748.6 596 L750.4 752" stroke="#f01cf0" stroke-width="4"/>
<path d="M887.8 596 L890.2 752" stroke="#f01cf0" stroke-width="3" stroke-dasharray="5 3"/>
<path d="M844 739.6 L850.3 735.9 L860.3 734.6 L869.1 736.5 L876.7 741.5" stroke="#e010e0" stroke-width="3"/>
</g>
</g>
<g fill="none" stroke="#18e018" stroke-width="1.5" stroke-dasharray="1.5 3.3">
<path d="M804 458 L811 458.8 L896 441 L960 459.6 L1000 470"/>
<path d="M757 477 Q760 491 776 494.5 Q792 492 798 479"/>
<path d="M593 357.5 L641 357 M644 353 L643.2 308 M646 307 L690 306 M592 362 L592.6 372"/>
<path d="M613 437 L632 436.5 M735 434 L742 434"/>
</g>
<g clip-path="url(#lc)" fill="none">
<path d="M748.9 596 L748.5 615 L749.4 640 L749 668 L750 700 L749.8 725 L750.7 752" stroke="#10e010" stroke-width="1.2"/>
<path d="M889.2 596 L888.8 620 L889.8 650 L889.6 680 L890.8 715 L891.6 752" stroke="#10e010" stroke-width="1.3"/>
</g>
<g  stroke="#a0a0a4" stroke-opacity=".54" stroke-width="1" fill="none">
<path d="M369.7 199.0 L381.9 1004.1"/>
<path d="M418.5 198.3 L430.7 1003.4"/>
<path d="M467.3 197.6 L479.5 1002.7"/>
<path d="M516.1 196.9 L528.3 1002.0"/>
<path d="M565.0 196.1 L577.2 1001.2"/>
<path d="M613.8 195.4 L626.0 1000.5"/>
<path d="M662.6 194.7 L674.8 999.8"/>
<path d="M711.4 194.0 L723.6 999.1"/>
<path d="M760.2 193.2 L772.4 998.3"/>
<path d="M809.0 192.5 L821.2 997.6"/>
<path d="M857.8 191.8 L870.0 996.9"/>
<path d="M906.6 191.1 L918.8 996.2"/>
<path d="M955.4 190.3 L967.6 995.4"/>
<path d="M1004.2 189.6 L1016.4 994.7"/>
<path d="M1053.0 188.9 L1065.2 994.0"/>
<path d="M1101.8 188.2 L1114.0 993.3"/>
<path d="M1150.7 187.4 L1162.8 992.5"/>
<path d="M1199.5 186.7 L1211.7 991.8"/>
<path d="M1248.3 186.0 L1260.5 991.1"/>
<path d="M1297.1 185.3 L1309.3 990.4"/>
<path d="M320.9 199.7 L1345.9 184.6"/>
<path d="M321.7 248.5 L1346.6 233.3"/>
<path d="M322.4 297.3 L1347.4 282.1"/>
<path d="M323.1 346.1 L1348.1 330.9"/>
<path d="M323.9 394.9 L1348.8 379.7"/>
<path d="M324.6 443.7 L1349.6 428.5"/>
<path d="M325.3 492.5 L1350.3 477.3"/>
<path d="M326.1 541.3 L1351.1 526.1"/>
<path d="M326.8 590.1 L1351.8 574.9"/>
<path d="M327.6 638.9 L1352.5 623.7"/>
<path d="M328.3 687.7 L1353.3 672.5"/>
<path d="M329.0 736.5 L1354.0 721.3"/>
<path d="M329.8 785.3 L1354.8 770.1"/>
<path d="M330.5 834.1 L1355.5 818.9"/>
<path d="M331.3 882.9 L1356.2 867.7"/>
<path d="M332.0 931.7 L1357.0 916.5"/>
<path d="M332.7 980.5 L1357.7 965.3"/>
</g>
<path d="M812.4 627.2 L814.4 666" stroke="#f00" stroke-width="4.4"/>
<path d="M766.5 678.3 L805 676.5" stroke="#0e0" stroke-width="4.2"/>
<path d="M801.4 663.6 L826.8 662.4 L828.3 687.5 L803 688.8 Z" fill="none" stroke="#333" stroke-width="1"/>
<circle cx="814.9" cy="676" r="10.7" fill="#10f4f4"/>
<path d="M814.9 673.4 L817.5 676 L814.9 678.6 L812.3 676 Z" fill="#1010e8"/>
<circle cx="814.5" cy="667.2" r="1.2" fill="#111"/>
</svg>
</div>
</body></html>
